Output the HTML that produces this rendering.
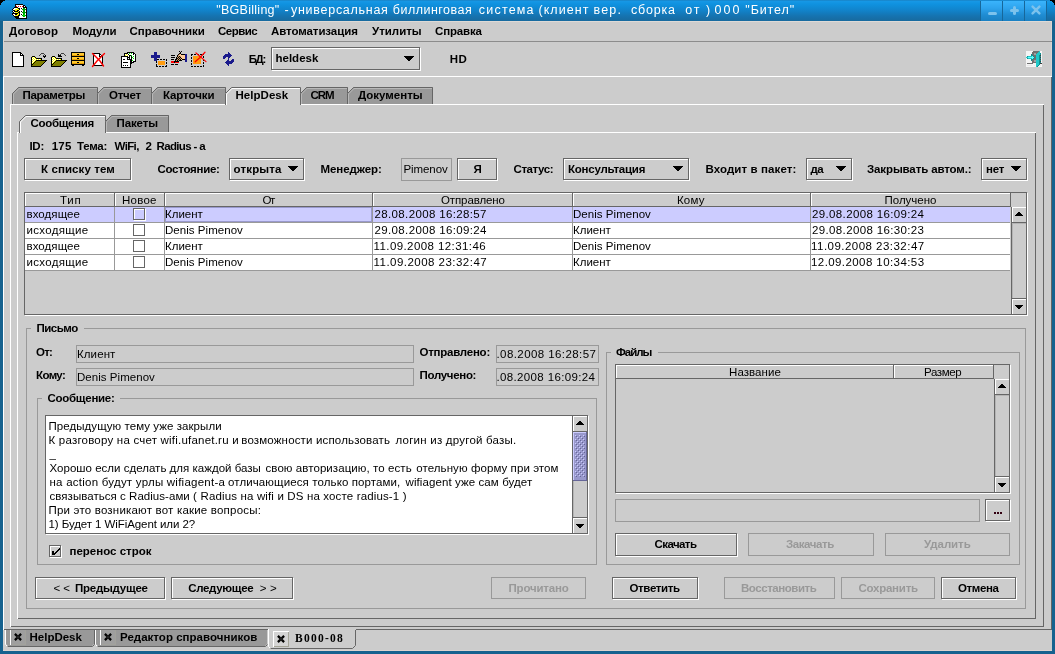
<!DOCTYPE html>
<html><head><meta charset="utf-8"><title>BGBilling</title>
<style>
html,body{margin:0;padding:0;}
body{width:1055px;height:654px;position:relative;overflow:hidden;background:#16628f;font-family:"Liberation Sans",sans-serif;}
div,svg,span{position:absolute;display:block;}
span{white-space:pre;line-height:16px;height:16px;}
</style></head><body>
<div style="left:0;top:0;width:1055px;height:654px;background:#16628f"></div>
<div style="left:0;top:0;width:1055px;height:21px;background:linear-gradient(#1a7ab8 0px,#1798e6 1px,#0f92e0 4px,#1184cc 10px,#1573b0 16px,#186a9e 21px)"></div>
<svg style="left:0px;top:0px;" width="6" height="6" viewBox="0 0 6 6" shape-rendering="crispEdges"><path d="M0 0H5V1H3V2H2V3H1V5H0Z" fill="#000"/></svg>
<svg style="left:1049px;top:0px;" width="6" height="6" viewBox="0 0 6 6" shape-rendering="crispEdges"><path d="M6 0H1V1H3V2H4V3H5V5H6Z" fill="#000"/></svg>
<div style="left:981px;top:1px;width:21px;height:20px;background:linear-gradient(#3ab4fc,#2ea4ee 35%,#1f8cd2 70%,#1a80c2)"></div>
<div style="left:980px;top:1px;width:1px;height:20px;background:#17679a;"></div>
<div style="left:1003px;top:1px;width:21px;height:20px;background:linear-gradient(#3ab4fc,#2ea4ee 35%,#1f8cd2 70%,#1a80c2)"></div>
<div style="left:1002px;top:1px;width:1px;height:20px;background:#17679a;"></div>
<div style="left:1025px;top:1px;width:21px;height:20px;background:linear-gradient(#3ab4fc,#2ea4ee 35%,#1f8cd2 70%,#1a80c2)"></div>
<div style="left:1024px;top:1px;width:1px;height:20px;background:#17679a;"></div>
<div style="left:1046px;top:1px;width:1px;height:20px;background:#17679a;"></div>
<div style="left:988px;top:12px;width:9px;height:3px;background:#7cc2ec;border-radius:1.5px"></div>
<div style="left:1010px;top:9px;width:9px;height:3px;background:#7cc2ec;border-radius:1.5px"></div>
<div style="left:1013px;top:6px;width:3px;height:9px;background:#7cc2ec;border-radius:1.5px"></div>
<svg style="left:1031px;top:5px;" width="10" height="10" viewBox="0 0 10 10" shape-rendering="crispEdges"><path d="M1.6 1.6L8.4 8.4M8.4 1.6L1.6 8.4" stroke="#7cc2ec" stroke-width="2.4" stroke-linecap="round" fill="none" shape-rendering="auto"/></svg>
<div style="left:3px;top:21px;width:1049px;height:630px;background:#cccccc;"></div>
<div style="left:3px;top:21px;width:1049px;height:1px;background:#dedad6;"></div>
<div style="left:3px;top:21px;width:1px;height:55px;background:#dcd4d0;"></div>
<div style="left:1051px;top:21px;width:1px;height:55px;background:#dcd4d0;"></div>
<div style="left:3px;top:650px;width:1049px;height:1px;background:#dcd4d0;"></div>
<div style="left:4px;top:41px;width:1048px;height:1px;background:#8c8c8c;"></div>
<div style="left:3px;top:76px;width:1049px;height:1px;background:#ffffff;"></div>
<div style="left:3px;top:76px;width:1px;height:554px;background:#ffffff;"></div>
<div style="left:4px;top:629px;width:1048px;height:1px;background:#666666;"></div>
<div style="left:1051px;top:77px;width:1px;height:553px;background:#666666;"></div>
<div style="left:5px;top:77px;width:1046px;height:1px;background:#cccccc;"></div>
<div style="left:10px;top:104px;width:1034px;height:1px;background:#ffffff;"></div>
<div style="left:10px;top:104px;width:1px;height:523px;background:#ffffff;"></div>
<div style="left:11px;top:626px;width:1033px;height:1px;background:#666666;"></div>
<div style="left:1043px;top:105px;width:1px;height:522px;background:#666666;"></div>
<svg style="left:12px;top:87px" width="86" height="17" viewBox="0 0 86 17"><polygon points="0,17 0,6 6,0 86,0 86,17" fill="#999999" shape-rendering="crispEdges"/><path d="M0.5 17V6.5L6.5 0.5H85.5V17" fill="none" stroke="#666666" stroke-width="1" shape-rendering="auto"/><path d="M1.5 17V7L7 1.5H85" fill="none" stroke="#b8b8b8" stroke-width="1" shape-rendering="auto"/></svg>
<svg style="left:97px;top:87px" width="55" height="17" viewBox="0 0 55 17"><polygon points="0,17 0,6 6,0 55,0 55,17" fill="#999999" shape-rendering="crispEdges"/><path d="M0.5 17V6.5L6.5 0.5H54.5V17" fill="none" stroke="#666666" stroke-width="1" shape-rendering="auto"/><path d="M1.5 17V7L7 1.5H54" fill="none" stroke="#b8b8b8" stroke-width="1" shape-rendering="auto"/></svg>
<svg style="left:151px;top:87px" width="75" height="17" viewBox="0 0 75 17"><polygon points="0,17 0,6 6,0 75,0 75,17" fill="#999999" shape-rendering="crispEdges"/><path d="M0.5 17V6.5L6.5 0.5H74.5V17" fill="none" stroke="#666666" stroke-width="1" shape-rendering="auto"/><path d="M1.5 17V7L7 1.5H74" fill="none" stroke="#b8b8b8" stroke-width="1" shape-rendering="auto"/></svg>
<svg style="left:225px;top:87px" width="76" height="18" viewBox="0 0 76 18"><polygon points="0,18 0,6 6,0 76,0 76,18" fill="#cccccc" shape-rendering="crispEdges"/><path d="M0.5 18V6.5L6.5 0.5H75.5V18" fill="none" stroke="#666666" stroke-width="1" shape-rendering="auto"/><path d="M1.5 18V7L7 1.5H75" fill="none" stroke="#ffffff" stroke-width="1" shape-rendering="auto"/></svg>
<svg style="left:300px;top:87px" width="48" height="17" viewBox="0 0 48 17"><polygon points="0,17 0,6 6,0 48,0 48,17" fill="#999999" shape-rendering="crispEdges"/><path d="M0.5 17V6.5L6.5 0.5H47.5V17" fill="none" stroke="#666666" stroke-width="1" shape-rendering="auto"/><path d="M1.5 17V7L7 1.5H47" fill="none" stroke="#b8b8b8" stroke-width="1" shape-rendering="auto"/></svg>
<svg style="left:347px;top:87px" width="86" height="17" viewBox="0 0 86 17"><polygon points="0,17 0,6 6,0 86,0 86,17" fill="#999999" shape-rendering="crispEdges"/><path d="M0.5 17V6.5L6.5 0.5H85.5V17" fill="none" stroke="#666666" stroke-width="1" shape-rendering="auto"/><path d="M1.5 17V7L7 1.5H85" fill="none" stroke="#b8b8b8" stroke-width="1" shape-rendering="auto"/></svg>
<div style="left:17px;top:132px;width:1019px;height:1px;background:#ffffff;"></div>
<div style="left:17px;top:132px;width:1px;height:487px;background:#ffffff;"></div>
<div style="left:18px;top:618px;width:1018px;height:1px;background:#666666;"></div>
<div style="left:1035px;top:133px;width:1px;height:486px;background:#666666;"></div>
<svg style="left:19px;top:115px" width="87" height="18" viewBox="0 0 87 18"><polygon points="0,18 0,6 6,0 87,0 87,18" fill="#cccccc" shape-rendering="crispEdges"/><path d="M0.5 18V6.5L6.5 0.5H86.5V18" fill="none" stroke="#666666" stroke-width="1" shape-rendering="auto"/><path d="M1.5 18V7L7 1.5H86" fill="none" stroke="#ffffff" stroke-width="1" shape-rendering="auto"/></svg>
<svg style="left:105px;top:115px" width="64" height="17" viewBox="0 0 64 17"><polygon points="0,17 0,6 6,0 64,0 64,17" fill="#999999" shape-rendering="crispEdges"/><path d="M0.5 17V6.5L6.5 0.5H63.5V17" fill="none" stroke="#666666" stroke-width="1" shape-rendering="auto"/><path d="M1.5 17V7L7 1.5H63" fill="none" stroke="#b8b8b8" stroke-width="1" shape-rendering="auto"/></svg>
<div style="left:272px;top:48px;width:149px;height:1px;background:#ffffff;"></div>
<div style="left:272px;top:70px;width:149px;height:1px;background:#ffffff;"></div>
<div style="left:272px;top:48px;width:1px;height:23px;background:#ffffff;"></div>
<div style="left:420px;top:48px;width:1px;height:23px;background:#ffffff;"></div>
<div style="left:271px;top:47px;width:149px;height:1px;background:#666666;"></div>
<div style="left:271px;top:69px;width:149px;height:1px;background:#666666;"></div>
<div style="left:271px;top:47px;width:1px;height:23px;background:#666666;"></div>
<div style="left:419px;top:47px;width:1px;height:23px;background:#666666;"></div>
<div style="left:271px;top:70px;width:1px;height:1px;background:#cccccc;"></div>
<div style="left:420px;top:47px;width:1px;height:1px;background:#cccccc;"></div>
<svg style="left:404px;top:56px;" width="10" height="5" viewBox="0 0 10 5" shape-rendering="crispEdges"><rect x="0" y="0" width="10" height="1" fill="#000"/><rect x="1" y="1" width="8" height="1" fill="#000"/><rect x="2" y="2" width="6" height="1" fill="#000"/><rect x="3" y="3" width="4" height="1" fill="#000"/><rect x="4" y="4" width="2" height="1" fill="#000"/></svg>
<div style="left:25px;top:159px;width:107px;height:1px;background:#ffffff;"></div>
<div style="left:25px;top:180px;width:107px;height:1px;background:#ffffff;"></div>
<div style="left:25px;top:159px;width:1px;height:22px;background:#ffffff;"></div>
<div style="left:131px;top:159px;width:1px;height:22px;background:#ffffff;"></div>
<div style="left:24px;top:158px;width:107px;height:1px;background:#666666;"></div>
<div style="left:24px;top:179px;width:107px;height:1px;background:#666666;"></div>
<div style="left:24px;top:158px;width:1px;height:22px;background:#666666;"></div>
<div style="left:130px;top:158px;width:1px;height:22px;background:#666666;"></div>
<div style="left:24px;top:180px;width:1px;height:1px;background:#cccccc;"></div>
<div style="left:131px;top:158px;width:1px;height:1px;background:#cccccc;"></div>
<div style="left:230px;top:159px;width:75px;height:1px;background:#ffffff;"></div>
<div style="left:230px;top:180px;width:75px;height:1px;background:#ffffff;"></div>
<div style="left:230px;top:159px;width:1px;height:22px;background:#ffffff;"></div>
<div style="left:304px;top:159px;width:1px;height:22px;background:#ffffff;"></div>
<div style="left:229px;top:158px;width:75px;height:1px;background:#666666;"></div>
<div style="left:229px;top:179px;width:75px;height:1px;background:#666666;"></div>
<div style="left:229px;top:158px;width:1px;height:22px;background:#666666;"></div>
<div style="left:303px;top:158px;width:1px;height:22px;background:#666666;"></div>
<div style="left:229px;top:180px;width:1px;height:1px;background:#cccccc;"></div>
<div style="left:304px;top:158px;width:1px;height:1px;background:#cccccc;"></div>
<svg style="left:288px;top:166px;" width="10" height="5" viewBox="0 0 10 5" shape-rendering="crispEdges"><rect x="0" y="0" width="10" height="1" fill="#000"/><rect x="1" y="1" width="8" height="1" fill="#000"/><rect x="2" y="2" width="6" height="1" fill="#000"/><rect x="3" y="3" width="4" height="1" fill="#000"/><rect x="4" y="4" width="2" height="1" fill="#000"/></svg>
<div style="left:401px;top:158px;width:51px;height:1px;background:#999999;"></div>
<div style="left:401px;top:180px;width:51px;height:1px;background:#999999;"></div>
<div style="left:401px;top:158px;width:1px;height:23px;background:#999999;"></div>
<div style="left:451px;top:158px;width:1px;height:23px;background:#999999;"></div>
<div style="left:458px;top:159px;width:40px;height:1px;background:#ffffff;"></div>
<div style="left:458px;top:180px;width:40px;height:1px;background:#ffffff;"></div>
<div style="left:458px;top:159px;width:1px;height:22px;background:#ffffff;"></div>
<div style="left:497px;top:159px;width:1px;height:22px;background:#ffffff;"></div>
<div style="left:457px;top:158px;width:40px;height:1px;background:#666666;"></div>
<div style="left:457px;top:179px;width:40px;height:1px;background:#666666;"></div>
<div style="left:457px;top:158px;width:1px;height:22px;background:#666666;"></div>
<div style="left:496px;top:158px;width:1px;height:22px;background:#666666;"></div>
<div style="left:457px;top:180px;width:1px;height:1px;background:#cccccc;"></div>
<div style="left:497px;top:158px;width:1px;height:1px;background:#cccccc;"></div>
<div style="left:564px;top:159px;width:126px;height:1px;background:#ffffff;"></div>
<div style="left:564px;top:180px;width:126px;height:1px;background:#ffffff;"></div>
<div style="left:564px;top:159px;width:1px;height:22px;background:#ffffff;"></div>
<div style="left:689px;top:159px;width:1px;height:22px;background:#ffffff;"></div>
<div style="left:563px;top:158px;width:126px;height:1px;background:#666666;"></div>
<div style="left:563px;top:179px;width:126px;height:1px;background:#666666;"></div>
<div style="left:563px;top:158px;width:1px;height:22px;background:#666666;"></div>
<div style="left:688px;top:158px;width:1px;height:22px;background:#666666;"></div>
<div style="left:563px;top:180px;width:1px;height:1px;background:#cccccc;"></div>
<div style="left:689px;top:158px;width:1px;height:1px;background:#cccccc;"></div>
<svg style="left:673px;top:166px;" width="10" height="5" viewBox="0 0 10 5" shape-rendering="crispEdges"><rect x="0" y="0" width="10" height="1" fill="#000"/><rect x="1" y="1" width="8" height="1" fill="#000"/><rect x="2" y="2" width="6" height="1" fill="#000"/><rect x="3" y="3" width="4" height="1" fill="#000"/><rect x="4" y="4" width="2" height="1" fill="#000"/></svg>
<div style="left:807px;top:159px;width:46px;height:1px;background:#ffffff;"></div>
<div style="left:807px;top:180px;width:46px;height:1px;background:#ffffff;"></div>
<div style="left:807px;top:159px;width:1px;height:22px;background:#ffffff;"></div>
<div style="left:852px;top:159px;width:1px;height:22px;background:#ffffff;"></div>
<div style="left:806px;top:158px;width:46px;height:1px;background:#666666;"></div>
<div style="left:806px;top:179px;width:46px;height:1px;background:#666666;"></div>
<div style="left:806px;top:158px;width:1px;height:22px;background:#666666;"></div>
<div style="left:851px;top:158px;width:1px;height:22px;background:#666666;"></div>
<div style="left:806px;top:180px;width:1px;height:1px;background:#cccccc;"></div>
<div style="left:852px;top:158px;width:1px;height:1px;background:#cccccc;"></div>
<svg style="left:836px;top:166px;" width="10" height="5" viewBox="0 0 10 5" shape-rendering="crispEdges"><rect x="0" y="0" width="10" height="1" fill="#000"/><rect x="1" y="1" width="8" height="1" fill="#000"/><rect x="2" y="2" width="6" height="1" fill="#000"/><rect x="3" y="3" width="4" height="1" fill="#000"/><rect x="4" y="4" width="2" height="1" fill="#000"/></svg>
<div style="left:982px;top:159px;width:46px;height:1px;background:#ffffff;"></div>
<div style="left:982px;top:180px;width:46px;height:1px;background:#ffffff;"></div>
<div style="left:982px;top:159px;width:1px;height:22px;background:#ffffff;"></div>
<div style="left:1027px;top:159px;width:1px;height:22px;background:#ffffff;"></div>
<div style="left:981px;top:158px;width:46px;height:1px;background:#666666;"></div>
<div style="left:981px;top:179px;width:46px;height:1px;background:#666666;"></div>
<div style="left:981px;top:158px;width:1px;height:22px;background:#666666;"></div>
<div style="left:1026px;top:158px;width:1px;height:22px;background:#666666;"></div>
<div style="left:981px;top:180px;width:1px;height:1px;background:#cccccc;"></div>
<div style="left:1027px;top:158px;width:1px;height:1px;background:#cccccc;"></div>
<svg style="left:1011px;top:166px;" width="10" height="5" viewBox="0 0 10 5" shape-rendering="crispEdges"><rect x="0" y="0" width="10" height="1" fill="#000"/><rect x="1" y="1" width="8" height="1" fill="#000"/><rect x="2" y="2" width="6" height="1" fill="#000"/><rect x="3" y="3" width="4" height="1" fill="#000"/><rect x="4" y="4" width="2" height="1" fill="#000"/></svg>
<div style="left:24px;top:192px;width:1003px;height:1px;background:#666666;"></div>
<div style="left:24px;top:314px;width:1003px;height:1px;background:#666666;"></div>
<div style="left:24px;top:192px;width:1px;height:123px;background:#666666;"></div>
<div style="left:1026px;top:192px;width:1px;height:123px;background:#666666;"></div>
<div style="left:25px;top:315px;width:1003px;height:1px;background:#ffffff;"></div>
<div style="left:1027px;top:193px;width:1px;height:123px;background:#ffffff;"></div>
<div style="left:25px;top:193px;width:90px;height:1px;background:#ffffff;"></div>
<div style="left:25px;top:193px;width:1px;height:13px;background:#ffffff;"></div>
<div style="left:25px;top:206px;width:90px;height:1px;background:#666666;"></div>
<div style="left:114px;top:193px;width:1px;height:14px;background:#666666;"></div>
<div style="left:115px;top:193px;width:50px;height:1px;background:#ffffff;"></div>
<div style="left:115px;top:193px;width:1px;height:13px;background:#ffffff;"></div>
<div style="left:115px;top:206px;width:50px;height:1px;background:#666666;"></div>
<div style="left:164px;top:193px;width:1px;height:14px;background:#666666;"></div>
<div style="left:165px;top:193px;width:208px;height:1px;background:#ffffff;"></div>
<div style="left:165px;top:193px;width:1px;height:13px;background:#ffffff;"></div>
<div style="left:165px;top:206px;width:208px;height:1px;background:#666666;"></div>
<div style="left:372px;top:193px;width:1px;height:14px;background:#666666;"></div>
<div style="left:373px;top:193px;width:200px;height:1px;background:#ffffff;"></div>
<div style="left:373px;top:193px;width:1px;height:13px;background:#ffffff;"></div>
<div style="left:373px;top:206px;width:200px;height:1px;background:#666666;"></div>
<div style="left:572px;top:193px;width:1px;height:14px;background:#666666;"></div>
<div style="left:573px;top:193px;width:238px;height:1px;background:#ffffff;"></div>
<div style="left:573px;top:193px;width:1px;height:13px;background:#ffffff;"></div>
<div style="left:573px;top:206px;width:238px;height:1px;background:#666666;"></div>
<div style="left:810px;top:193px;width:1px;height:14px;background:#666666;"></div>
<div style="left:811px;top:193px;width:200px;height:1px;background:#ffffff;"></div>
<div style="left:811px;top:193px;width:1px;height:13px;background:#ffffff;"></div>
<div style="left:811px;top:206px;width:200px;height:1px;background:#666666;"></div>
<div style="left:1010px;top:193px;width:1px;height:14px;background:#666666;"></div>
<div style="left:25px;top:207px;width:985px;height:15px;background:#ccccff;"></div>
<div style="left:25px;top:222px;width:985px;height:1px;background:#999999;"></div>
<div style="left:25px;top:223px;width:985px;height:15px;background:#ffffff;"></div>
<div style="left:25px;top:238px;width:985px;height:1px;background:#999999;"></div>
<div style="left:25px;top:239px;width:985px;height:15px;background:#ffffff;"></div>
<div style="left:25px;top:254px;width:985px;height:1px;background:#999999;"></div>
<div style="left:25px;top:255px;width:985px;height:15px;background:#ffffff;"></div>
<div style="left:25px;top:270px;width:985px;height:1px;background:#999999;"></div>
<div style="left:114px;top:207px;width:1px;height:64px;background:#999999;"></div>
<div style="left:164px;top:207px;width:1px;height:64px;background:#999999;"></div>
<div style="left:372px;top:207px;width:1px;height:64px;background:#999999;"></div>
<div style="left:572px;top:207px;width:1px;height:64px;background:#999999;"></div>
<div style="left:810px;top:207px;width:1px;height:64px;background:#999999;"></div>
<div style="left:165px;top:207px;width:207px;height:1px;background:#9999cc;"></div>
<div style="left:165px;top:221px;width:207px;height:1px;background:#9999cc;"></div>
<div style="left:165px;top:207px;width:1px;height:15px;background:#9999cc;"></div>
<div style="left:371px;top:207px;width:1px;height:15px;background:#9999cc;"></div>
<div style="left:133px;top:208px;width:12px;height:12px;background:#ccccff;"></div>
<div style="left:134px;top:209px;width:12px;height:1px;background:#ffffff;"></div>
<div style="left:134px;top:220px;width:12px;height:1px;background:#ffffff;"></div>
<div style="left:134px;top:209px;width:1px;height:12px;background:#ffffff;"></div>
<div style="left:145px;top:209px;width:1px;height:12px;background:#ffffff;"></div>
<div style="left:133px;top:208px;width:12px;height:1px;background:#666666;"></div>
<div style="left:133px;top:219px;width:12px;height:1px;background:#666666;"></div>
<div style="left:133px;top:208px;width:1px;height:12px;background:#666666;"></div>
<div style="left:144px;top:208px;width:1px;height:12px;background:#666666;"></div>
<div style="left:133px;top:220px;width:1px;height:1px;background:#ccccff;"></div>
<div style="left:145px;top:208px;width:1px;height:1px;background:#ccccff;"></div>
<div style="left:133px;top:224px;width:12px;height:12px;background:#ffffff;"></div>
<div style="left:134px;top:225px;width:12px;height:1px;background:#ffffff;"></div>
<div style="left:134px;top:236px;width:12px;height:1px;background:#ffffff;"></div>
<div style="left:134px;top:225px;width:1px;height:12px;background:#ffffff;"></div>
<div style="left:145px;top:225px;width:1px;height:12px;background:#ffffff;"></div>
<div style="left:133px;top:224px;width:12px;height:1px;background:#666666;"></div>
<div style="left:133px;top:235px;width:12px;height:1px;background:#666666;"></div>
<div style="left:133px;top:224px;width:1px;height:12px;background:#666666;"></div>
<div style="left:144px;top:224px;width:1px;height:12px;background:#666666;"></div>
<div style="left:133px;top:236px;width:1px;height:1px;background:#ffffff;"></div>
<div style="left:145px;top:224px;width:1px;height:1px;background:#ffffff;"></div>
<div style="left:133px;top:240px;width:12px;height:12px;background:#ffffff;"></div>
<div style="left:134px;top:241px;width:12px;height:1px;background:#ffffff;"></div>
<div style="left:134px;top:252px;width:12px;height:1px;background:#ffffff;"></div>
<div style="left:134px;top:241px;width:1px;height:12px;background:#ffffff;"></div>
<div style="left:145px;top:241px;width:1px;height:12px;background:#ffffff;"></div>
<div style="left:133px;top:240px;width:12px;height:1px;background:#666666;"></div>
<div style="left:133px;top:251px;width:12px;height:1px;background:#666666;"></div>
<div style="left:133px;top:240px;width:1px;height:12px;background:#666666;"></div>
<div style="left:144px;top:240px;width:1px;height:12px;background:#666666;"></div>
<div style="left:133px;top:252px;width:1px;height:1px;background:#ffffff;"></div>
<div style="left:145px;top:240px;width:1px;height:1px;background:#ffffff;"></div>
<div style="left:133px;top:256px;width:12px;height:12px;background:#ffffff;"></div>
<div style="left:134px;top:257px;width:12px;height:1px;background:#ffffff;"></div>
<div style="left:134px;top:268px;width:12px;height:1px;background:#ffffff;"></div>
<div style="left:134px;top:257px;width:1px;height:12px;background:#ffffff;"></div>
<div style="left:145px;top:257px;width:1px;height:12px;background:#ffffff;"></div>
<div style="left:133px;top:256px;width:12px;height:1px;background:#666666;"></div>
<div style="left:133px;top:267px;width:12px;height:1px;background:#666666;"></div>
<div style="left:133px;top:256px;width:1px;height:12px;background:#666666;"></div>
<div style="left:144px;top:256px;width:1px;height:12px;background:#666666;"></div>
<div style="left:133px;top:268px;width:1px;height:1px;background:#ffffff;"></div>
<div style="left:145px;top:256px;width:1px;height:1px;background:#ffffff;"></div>
<div style="left:1011px;top:207px;width:15px;height:107px;background:#cccccc;"></div>
<div style="left:1011px;top:207px;width:1px;height:107px;background:#666666;"></div>
<div style="left:1012px;top:207px;width:14px;height:1px;background:#ffffff;"></div>
<div style="left:1012px;top:207px;width:1px;height:15px;background:#ffffff;"></div>
<div style="left:1011px;top:222px;width:15px;height:1px;background:#666666;"></div>
<svg style="left:1015px;top:212px;" width="8" height="4" viewBox="0 0 8 4" shape-rendering="crispEdges"><rect x="3" y="0" width="2" height="1" fill="#000"/><rect x="2" y="1" width="4" height="1" fill="#000"/><rect x="1" y="2" width="6" height="1" fill="#000"/><rect x="0" y="3" width="8" height="1" fill="#000"/></svg>
<div style="left:1011px;top:298px;width:15px;height:1px;background:#666666;"></div>
<div style="left:1012px;top:299px;width:14px;height:1px;background:#ffffff;"></div>
<div style="left:1012px;top:299px;width:1px;height:15px;background:#ffffff;"></div>
<svg style="left:1015px;top:305px;" width="8" height="4" viewBox="0 0 8 4" shape-rendering="crispEdges"><rect x="0" y="0" width="8" height="1" fill="#000"/><rect x="1" y="1" width="6" height="1" fill="#000"/><rect x="2" y="2" width="4" height="1" fill="#000"/><rect x="3" y="3" width="2" height="1" fill="#000"/></svg>
<div style="left:1012px;top:223px;width:14px;height:1px;background:#b4b4b4;"></div>
<div style="left:1012px;top:223px;width:1px;height:75px;background:#b4b4b4;"></div>
<div style="left:26px;top:328px;width:5px;height:1px;background:#999999;"></div>
<div style="left:84px;top:328px;width:942px;height:1px;background:#999999;"></div>
<div style="left:26px;top:328px;width:1px;height:281px;background:#999999;"></div>
<div style="left:1025px;top:328px;width:1px;height:281px;background:#999999;"></div>
<div style="left:26px;top:608px;width:1000px;height:1px;background:#999999;"></div>
<div style="left:76px;top:345px;width:338px;height:1px;background:#999999;"></div>
<div style="left:76px;top:362px;width:338px;height:1px;background:#999999;"></div>
<div style="left:76px;top:345px;width:1px;height:18px;background:#999999;"></div>
<div style="left:413px;top:345px;width:1px;height:18px;background:#999999;"></div>
<div style="left:76px;top:368px;width:338px;height:1px;background:#999999;"></div>
<div style="left:76px;top:385px;width:338px;height:1px;background:#999999;"></div>
<div style="left:76px;top:368px;width:1px;height:18px;background:#999999;"></div>
<div style="left:413px;top:368px;width:1px;height:18px;background:#999999;"></div>
<div style="left:496px;top:345px;width:103px;height:1px;background:#999999;"></div>
<div style="left:496px;top:362px;width:103px;height:1px;background:#999999;"></div>
<div style="left:496px;top:345px;width:1px;height:18px;background:#999999;"></div>
<div style="left:598px;top:345px;width:1px;height:18px;background:#999999;"></div>
<div style="left:496px;top:368px;width:103px;height:1px;background:#999999;"></div>
<div style="left:496px;top:385px;width:103px;height:1px;background:#999999;"></div>
<div style="left:496px;top:368px;width:1px;height:18px;background:#999999;"></div>
<div style="left:598px;top:368px;width:1px;height:18px;background:#999999;"></div>
<div style="left:37px;top:398px;width:5px;height:1px;background:#999999;"></div>
<div style="left:120px;top:398px;width:477px;height:1px;background:#999999;"></div>
<div style="left:37px;top:398px;width:1px;height:167px;background:#999999;"></div>
<div style="left:596px;top:398px;width:1px;height:167px;background:#999999;"></div>
<div style="left:37px;top:564px;width:560px;height:1px;background:#999999;"></div>
<div style="left:606px;top:352px;width:5px;height:1px;background:#999999;"></div>
<div style="left:658px;top:352px;width:362px;height:1px;background:#999999;"></div>
<div style="left:606px;top:352px;width:1px;height:213px;background:#999999;"></div>
<div style="left:1019px;top:352px;width:1px;height:213px;background:#999999;"></div>
<div style="left:606px;top:564px;width:414px;height:1px;background:#999999;"></div>
<div style="left:45px;top:415px;width:543px;height:1px;background:#666666;"></div>
<div style="left:45px;top:533px;width:543px;height:1px;background:#666666;"></div>
<div style="left:45px;top:415px;width:1px;height:119px;background:#666666;"></div>
<div style="left:587px;top:415px;width:1px;height:119px;background:#666666;"></div>
<div style="left:46px;top:534px;width:543px;height:1px;background:#ffffff;"></div>
<div style="left:588px;top:416px;width:1px;height:119px;background:#ffffff;"></div>
<div style="left:46px;top:416px;width:526px;height:117px;background:#ffffff;"></div>
<div style="left:572px;top:416px;width:15px;height:117px;background:#cccccc;"></div>
<div style="left:572px;top:416px;width:1px;height:117px;background:#666666;"></div>
<div style="left:573px;top:416px;width:14px;height:1px;background:#ffffff;"></div>
<div style="left:573px;top:416px;width:1px;height:15px;background:#ffffff;"></div>
<div style="left:572px;top:431px;width:15px;height:1px;background:#666666;"></div>
<svg style="left:576px;top:421px;" width="8" height="4" viewBox="0 0 8 4" shape-rendering="crispEdges"><rect x="3" y="0" width="2" height="1" fill="#000"/><rect x="2" y="1" width="4" height="1" fill="#000"/><rect x="1" y="2" width="6" height="1" fill="#000"/><rect x="0" y="3" width="8" height="1" fill="#000"/></svg>
<div style="left:572px;top:517px;width:15px;height:1px;background:#666666;"></div>
<div style="left:573px;top:518px;width:14px;height:1px;background:#ffffff;"></div>
<div style="left:573px;top:518px;width:1px;height:15px;background:#ffffff;"></div>
<svg style="left:576px;top:524px;" width="8" height="4" viewBox="0 0 8 4" shape-rendering="crispEdges"><rect x="0" y="0" width="8" height="1" fill="#000"/><rect x="1" y="1" width="6" height="1" fill="#000"/><rect x="2" y="2" width="4" height="1" fill="#000"/><rect x="3" y="3" width="2" height="1" fill="#000"/></svg>
<div style="left:573px;top:432px;width:14px;height:1px;background:#b4b4b4;"></div>
<div style="left:573px;top:432px;width:1px;height:85px;background:#b4b4b4;"></div>
<div style="left:573px;top:432px;width:14px;height:49px;background:#9999cc;"></div>
<div style="left:586px;top:432px;width:1px;height:49px;background:#666699;"></div>
<div style="left:573px;top:480px;width:14px;height:1px;background:#666699;"></div>
<div style="left:573px;top:432px;width:13px;height:1px;background:#ccccff;"></div>
<div style="left:573px;top:432px;width:1px;height:48px;background:#ccccff;"></div>
<svg style="left:575px;top:435px;" width="10" height="42" viewBox="0 0 10 42" shape-rendering="crispEdges"><defs><pattern id="bmp" width="4" height="4" patternUnits="userSpaceOnUse"><rect width="1" height="1" fill="#ccccff"/><rect x="1" y="1" width="1" height="1" fill="#666699"/><rect x="2" y="2" width="1" height="1" fill="#ccccff"/><rect x="3" y="3" width="1" height="1" fill="#666699"/></pattern></defs><rect width="10" height="42" fill="url(#bmp)"/></svg>
<div style="left:50px;top:546px;width:12px;height:1px;background:#ffffff;"></div>
<div style="left:50px;top:557px;width:12px;height:1px;background:#ffffff;"></div>
<div style="left:50px;top:546px;width:1px;height:12px;background:#ffffff;"></div>
<div style="left:61px;top:546px;width:1px;height:12px;background:#ffffff;"></div>
<div style="left:49px;top:545px;width:12px;height:1px;background:#666666;"></div>
<div style="left:49px;top:556px;width:12px;height:1px;background:#666666;"></div>
<div style="left:49px;top:545px;width:1px;height:12px;background:#666666;"></div>
<div style="left:60px;top:545px;width:1px;height:12px;background:#666666;"></div>
<div style="left:49px;top:557px;width:1px;height:1px;background:#cccccc;"></div>
<div style="left:61px;top:545px;width:1px;height:1px;background:#cccccc;"></div>
<svg style="left:52px;top:548px;" width="9" height="9" viewBox="0 0 9 9" shape-rendering="crispEdges"><path d="M0 3h2v4h-2z M2 5h1v2h-1z M3 4h1v2h-1z M4 3h1v2h-1z M5 2h1v2h-1z M6 1h1v2h-1z M7 0h1v2h-1z" fill="#000"/></svg>
<div style="left:615px;top:364px;width:395px;height:1px;background:#666666;"></div>
<div style="left:615px;top:492px;width:395px;height:1px;background:#666666;"></div>
<div style="left:615px;top:364px;width:1px;height:129px;background:#666666;"></div>
<div style="left:1009px;top:364px;width:1px;height:129px;background:#666666;"></div>
<div style="left:616px;top:493px;width:395px;height:1px;background:#ffffff;"></div>
<div style="left:1010px;top:365px;width:1px;height:129px;background:#ffffff;"></div>
<div style="left:616px;top:365px;width:278px;height:1px;background:#ffffff;"></div>
<div style="left:616px;top:365px;width:1px;height:13px;background:#ffffff;"></div>
<div style="left:616px;top:378px;width:278px;height:1px;background:#666666;"></div>
<div style="left:893px;top:365px;width:1px;height:14px;background:#666666;"></div>
<div style="left:894px;top:365px;width:100px;height:1px;background:#ffffff;"></div>
<div style="left:894px;top:365px;width:1px;height:13px;background:#ffffff;"></div>
<div style="left:894px;top:378px;width:100px;height:1px;background:#666666;"></div>
<div style="left:993px;top:365px;width:1px;height:14px;background:#666666;"></div>
<div style="left:994px;top:379px;width:15px;height:113px;background:#cccccc;"></div>
<div style="left:994px;top:379px;width:1px;height:113px;background:#666666;"></div>
<div style="left:995px;top:379px;width:14px;height:1px;background:#ffffff;"></div>
<div style="left:995px;top:379px;width:1px;height:15px;background:#ffffff;"></div>
<div style="left:994px;top:394px;width:15px;height:1px;background:#666666;"></div>
<svg style="left:998px;top:384px;" width="8" height="4" viewBox="0 0 8 4" shape-rendering="crispEdges"><rect x="3" y="0" width="2" height="1" fill="#000"/><rect x="2" y="1" width="4" height="1" fill="#000"/><rect x="1" y="2" width="6" height="1" fill="#000"/><rect x="0" y="3" width="8" height="1" fill="#000"/></svg>
<div style="left:994px;top:476px;width:15px;height:1px;background:#666666;"></div>
<div style="left:995px;top:477px;width:14px;height:1px;background:#ffffff;"></div>
<div style="left:995px;top:477px;width:1px;height:15px;background:#ffffff;"></div>
<svg style="left:998px;top:483px;" width="8" height="4" viewBox="0 0 8 4" shape-rendering="crispEdges"><rect x="0" y="0" width="8" height="1" fill="#000"/><rect x="1" y="1" width="6" height="1" fill="#000"/><rect x="2" y="2" width="4" height="1" fill="#000"/><rect x="3" y="3" width="2" height="1" fill="#000"/></svg>
<div style="left:995px;top:395px;width:14px;height:1px;background:#b4b4b4;"></div>
<div style="left:995px;top:395px;width:1px;height:81px;background:#b4b4b4;"></div>
<div style="left:615px;top:499px;width:365px;height:1px;background:#999999;"></div>
<div style="left:615px;top:521px;width:365px;height:1px;background:#999999;"></div>
<div style="left:615px;top:499px;width:1px;height:23px;background:#999999;"></div>
<div style="left:979px;top:499px;width:1px;height:23px;background:#999999;"></div>
<div style="left:986px;top:500px;width:25px;height:1px;background:#ffffff;"></div>
<div style="left:986px;top:521px;width:25px;height:1px;background:#ffffff;"></div>
<div style="left:986px;top:500px;width:1px;height:22px;background:#ffffff;"></div>
<div style="left:1010px;top:500px;width:1px;height:22px;background:#ffffff;"></div>
<div style="left:985px;top:499px;width:25px;height:1px;background:#666666;"></div>
<div style="left:985px;top:520px;width:25px;height:1px;background:#666666;"></div>
<div style="left:985px;top:499px;width:1px;height:22px;background:#666666;"></div>
<div style="left:1009px;top:499px;width:1px;height:22px;background:#666666;"></div>
<div style="left:985px;top:521px;width:1px;height:1px;background:#cccccc;"></div>
<div style="left:1010px;top:499px;width:1px;height:1px;background:#cccccc;"></div>
<div style="left:994px;top:512px;width:2px;height:2px;background:#330011;"></div>
<div style="left:997px;top:512px;width:2px;height:2px;background:#330011;"></div>
<div style="left:1000px;top:512px;width:2px;height:2px;background:#330011;"></div>
<div style="left:616px;top:534px;width:122px;height:1px;background:#ffffff;"></div>
<div style="left:616px;top:556px;width:122px;height:1px;background:#ffffff;"></div>
<div style="left:616px;top:534px;width:1px;height:23px;background:#ffffff;"></div>
<div style="left:737px;top:534px;width:1px;height:23px;background:#ffffff;"></div>
<div style="left:615px;top:533px;width:122px;height:1px;background:#666666;"></div>
<div style="left:615px;top:555px;width:122px;height:1px;background:#666666;"></div>
<div style="left:615px;top:533px;width:1px;height:23px;background:#666666;"></div>
<div style="left:736px;top:533px;width:1px;height:23px;background:#666666;"></div>
<div style="left:615px;top:556px;width:1px;height:1px;background:#cccccc;"></div>
<div style="left:737px;top:533px;width:1px;height:1px;background:#cccccc;"></div>
<div style="left:748px;top:533px;width:126px;height:1px;background:#999999;"></div>
<div style="left:748px;top:555px;width:126px;height:1px;background:#999999;"></div>
<div style="left:748px;top:533px;width:1px;height:23px;background:#999999;"></div>
<div style="left:873px;top:533px;width:1px;height:23px;background:#999999;"></div>
<div style="left:885px;top:533px;width:125px;height:1px;background:#999999;"></div>
<div style="left:885px;top:555px;width:125px;height:1px;background:#999999;"></div>
<div style="left:885px;top:533px;width:1px;height:23px;background:#999999;"></div>
<div style="left:1009px;top:533px;width:1px;height:23px;background:#999999;"></div>
<div style="left:36px;top:578px;width:130px;height:1px;background:#ffffff;"></div>
<div style="left:36px;top:599px;width:130px;height:1px;background:#ffffff;"></div>
<div style="left:36px;top:578px;width:1px;height:22px;background:#ffffff;"></div>
<div style="left:165px;top:578px;width:1px;height:22px;background:#ffffff;"></div>
<div style="left:35px;top:577px;width:130px;height:1px;background:#666666;"></div>
<div style="left:35px;top:598px;width:130px;height:1px;background:#666666;"></div>
<div style="left:35px;top:577px;width:1px;height:22px;background:#666666;"></div>
<div style="left:164px;top:577px;width:1px;height:22px;background:#666666;"></div>
<div style="left:35px;top:599px;width:1px;height:1px;background:#cccccc;"></div>
<div style="left:165px;top:577px;width:1px;height:1px;background:#cccccc;"></div>
<div style="left:172px;top:578px;width:122px;height:1px;background:#ffffff;"></div>
<div style="left:172px;top:599px;width:122px;height:1px;background:#ffffff;"></div>
<div style="left:172px;top:578px;width:1px;height:22px;background:#ffffff;"></div>
<div style="left:293px;top:578px;width:1px;height:22px;background:#ffffff;"></div>
<div style="left:171px;top:577px;width:122px;height:1px;background:#666666;"></div>
<div style="left:171px;top:598px;width:122px;height:1px;background:#666666;"></div>
<div style="left:171px;top:577px;width:1px;height:22px;background:#666666;"></div>
<div style="left:292px;top:577px;width:1px;height:22px;background:#666666;"></div>
<div style="left:171px;top:599px;width:1px;height:1px;background:#cccccc;"></div>
<div style="left:293px;top:577px;width:1px;height:1px;background:#cccccc;"></div>
<div style="left:491px;top:577px;width:95px;height:1px;background:#999999;"></div>
<div style="left:491px;top:598px;width:95px;height:1px;background:#999999;"></div>
<div style="left:491px;top:577px;width:1px;height:22px;background:#999999;"></div>
<div style="left:585px;top:577px;width:1px;height:22px;background:#999999;"></div>
<div style="left:613px;top:578px;width:86px;height:1px;background:#ffffff;"></div>
<div style="left:613px;top:599px;width:86px;height:1px;background:#ffffff;"></div>
<div style="left:613px;top:578px;width:1px;height:22px;background:#ffffff;"></div>
<div style="left:698px;top:578px;width:1px;height:22px;background:#ffffff;"></div>
<div style="left:612px;top:577px;width:86px;height:1px;background:#666666;"></div>
<div style="left:612px;top:598px;width:86px;height:1px;background:#666666;"></div>
<div style="left:612px;top:577px;width:1px;height:22px;background:#666666;"></div>
<div style="left:697px;top:577px;width:1px;height:22px;background:#666666;"></div>
<div style="left:612px;top:599px;width:1px;height:1px;background:#cccccc;"></div>
<div style="left:698px;top:577px;width:1px;height:1px;background:#cccccc;"></div>
<div style="left:724px;top:577px;width:111px;height:1px;background:#999999;"></div>
<div style="left:724px;top:598px;width:111px;height:1px;background:#999999;"></div>
<div style="left:724px;top:577px;width:1px;height:22px;background:#999999;"></div>
<div style="left:834px;top:577px;width:1px;height:22px;background:#999999;"></div>
<div style="left:841px;top:577px;width:94px;height:1px;background:#999999;"></div>
<div style="left:841px;top:598px;width:94px;height:1px;background:#999999;"></div>
<div style="left:841px;top:577px;width:1px;height:22px;background:#999999;"></div>
<div style="left:934px;top:577px;width:1px;height:22px;background:#999999;"></div>
<div style="left:942px;top:578px;width:75px;height:1px;background:#ffffff;"></div>
<div style="left:942px;top:599px;width:75px;height:1px;background:#ffffff;"></div>
<div style="left:942px;top:578px;width:1px;height:22px;background:#ffffff;"></div>
<div style="left:1016px;top:578px;width:1px;height:22px;background:#ffffff;"></div>
<div style="left:941px;top:577px;width:75px;height:1px;background:#666666;"></div>
<div style="left:941px;top:598px;width:75px;height:1px;background:#666666;"></div>
<div style="left:941px;top:577px;width:1px;height:22px;background:#666666;"></div>
<div style="left:1015px;top:577px;width:1px;height:22px;background:#666666;"></div>
<div style="left:941px;top:599px;width:1px;height:1px;background:#cccccc;"></div>
<div style="left:1016px;top:577px;width:1px;height:1px;background:#cccccc;"></div>
<svg style="left:5px;top:630px" width="90" height="17" viewBox="0 0 90 17"><path d="M1 0V14L3 16H87L89 14V0Z" fill="#999999"/><path d="M0.5 0V14.5L2.5 16.5" fill="none" stroke="#ffffff"/><path d="M2.5 16.5H87.5L89.5 14.5V0" fill="none" stroke="#666666"/></svg>
<div style="left:10px;top:630px;width:1px;height:15px;background:#ffffff;"></div>
<div style="left:12px;top:630px;width:14px;height:15px;background:#a2a29c;"></div>
<div style="left:12px;top:630px;width:13px;height:14px;background:#9f9f9f;"></div>
<svg style="left:14px;top:633px;" width="8" height="8" viewBox="0 0 8 8" shape-rendering="crispEdges"><path d="M0.9 0.9L7.1 7.1M7.1 0.9L0.9 7.1" stroke="#000" stroke-width="2.2" fill="none" shape-rendering="auto"/><rect x="2.5" y="2.5" width="3" height="3" fill="#222" shape-rendering="auto"/></svg>
<svg style="left:95px;top:630px" width="173" height="17" viewBox="0 0 173 17"><path d="M1 0V14L3 16H170L172 14V0Z" fill="#999999"/><path d="M0.5 0V14.5L2.5 16.5" fill="none" stroke="#ffffff"/><path d="M2.5 16.5H170.5L172.5 14.5" fill="none" stroke="#666666"/></svg>
<div style="left:100px;top:630px;width:1px;height:15px;background:#ffffff;"></div>
<div style="left:102px;top:630px;width:14px;height:15px;background:#a2a29c;"></div>
<div style="left:102px;top:630px;width:13px;height:14px;background:#9f9f9f;"></div>
<svg style="left:104px;top:633px;" width="8" height="8" viewBox="0 0 8 8" shape-rendering="crispEdges"><path d="M0.9 0.9L7.1 7.1M7.1 0.9L0.9 7.1" stroke="#000" stroke-width="2.2" fill="none" shape-rendering="auto"/><rect x="2.5" y="2.5" width="3" height="3" fill="#222" shape-rendering="auto"/></svg>
<div style="left:268px;top:629px;width:88px;height:1px;background:#cccccc;"></div>
<svg style="left:268px;top:629px" width="88" height="20" viewBox="0 0 88 20"><path d="M0 0V17L3 20H85L88 17V2L89 0Z" fill="#cccccc"/><path d="M0.5 0V17.5L2.5 19.5" fill="none" stroke="#ffffff"/><path d="M2.5 19.5H84.5L87.5 16.5V1" fill="none" stroke="#666666"/></svg>
<div style="left:273px;top:631px;width:16px;height:16px;background:#d4d4d4;"></div>
<div style="left:273px;top:631px;width:16px;height:1px;background:#ffffff;"></div>
<div style="left:273px;top:631px;width:1px;height:16px;background:#ffffff;"></div>
<div style="left:274px;top:646px;width:15px;height:1px;background:#a4a498;"></div>
<div style="left:288px;top:632px;width:1px;height:15px;background:#a4a498;"></div>
<svg style="left:277px;top:635px;" width="8" height="8" viewBox="0 0 8 8" shape-rendering="crispEdges"><path d="M0.9 0.9L7.1 7.1M7.1 0.9L0.9 7.1" stroke="#000" stroke-width="2.2" fill="none" shape-rendering="auto"/><rect x="2.5" y="2.5" width="3" height="3" fill="#222" shape-rendering="auto"/></svg>
<div id="tx" style="left:0;top:0;width:1055px;height:654px;will-change:transform">
<span style="left:216.30px;top:2px;font-size:12.5px;letter-spacing:0.270px;color:#ffffff;">&quot;BGBilling&quot;</span>
<span style="left:284.50px;top:2px;font-size:12.5px;letter-spacing:0.000px;color:#ffffff;">-</span>
<span style="left:291.00px;top:2px;font-size:12.5px;letter-spacing:0.725px;color:#ffffff;">универсальная</span>
<span style="left:392.80px;top:2px;font-size:12.5px;letter-spacing:0.480px;color:#ffffff;">биллинговая</span>
<span style="left:478.80px;top:2px;font-size:12.5px;letter-spacing:1.200px;color:#ffffff;">система</span>
<span style="left:538.40px;top:2px;font-size:12.5px;letter-spacing:1.083px;color:#ffffff;">(клиент</span>
<span style="left:593.50px;top:2px;font-size:12.5px;letter-spacing:1.167px;color:#ffffff;">вер.</span>
<span style="left:631.00px;top:2px;font-size:12.5px;letter-spacing:0.800px;color:#ffffff;">сборка</span>
<span style="left:685.20px;top:2px;font-size:12.5px;letter-spacing:1.800px;color:#ffffff;">от</span>
<span style="left:706.00px;top:2px;font-size:12.5px;letter-spacing:0.000px;color:#ffffff;">)</span>
<span style="left:714.60px;top:2px;font-size:12.5px;letter-spacing:2.000px;color:#ffffff;">000</span>
<span style="left:745.30px;top:2px;font-size:12.5px;letter-spacing:0.900px;color:#ffffff;">&quot;Бител&quot;</span>
<span style="left:9.00px;top:23px;font-size:11.5px;letter-spacing:0.167px;color:#000;font-weight:bold;">Договор</span>
<span style="left:72.50px;top:23px;font-size:11.5px;letter-spacing:-0.100px;color:#000;font-weight:bold;">Модули</span>
<span style="left:129.50px;top:23px;font-size:11.5px;letter-spacing:-0.050px;color:#000;font-weight:bold;">Справочники</span>
<span style="left:218.00px;top:23px;font-size:11.5px;letter-spacing:-0.500px;color:#000;font-weight:bold;">Сервис</span>
<span style="left:271.00px;top:23px;font-size:11.5px;letter-spacing:-0.083px;color:#000;font-weight:bold;">Автоматизация</span>
<span style="left:372.00px;top:23px;font-size:11.5px;letter-spacing:0.000px;color:#000;font-weight:bold;">Утилиты</span>
<span style="left:435.00px;top:23px;font-size:11.5px;letter-spacing:-0.167px;color:#000;font-weight:bold;">Справка</span>
<span style="left:248.70px;top:51px;font-size:11.5px;letter-spacing:-1.350px;color:#000;font-weight:bold;">БД:</span>
<span style="left:275.50px;top:50px;font-size:11.5px;letter-spacing:0.000px;color:#000;font-weight:bold;">heldesk</span>
<span style="left:449.70px;top:51px;font-size:11.5px;letter-spacing:0.600px;color:#000;font-weight:bold;">HD</span>
<span style="left:22.50px;top:87px;font-size:11.5px;letter-spacing:-0.312px;color:#000;font-weight:bold;">Параметры</span>
<span style="left:109.00px;top:87px;font-size:11.5px;letter-spacing:-0.250px;color:#000;font-weight:bold;">Отчет</span>
<span style="left:162.90px;top:87px;font-size:11.5px;letter-spacing:-0.071px;color:#000;font-weight:bold;">Карточки</span>
<span style="left:235.40px;top:87px;font-size:11.5px;letter-spacing:0.057px;color:#000;font-weight:bold;">HelpDesk</span>
<span style="left:310.50px;top:87px;font-size:11.5px;letter-spacing:-1.000px;color:#000;font-weight:bold;">CRM</span>
<span style="left:358.00px;top:87px;font-size:11.5px;letter-spacing:0.000px;color:#000;font-weight:bold;">Документы</span>
<span style="left:30.50px;top:115px;font-size:11.5px;letter-spacing:-0.312px;color:#000;font-weight:bold;">Сообщения</span>
<span style="left:116.50px;top:115px;font-size:11.5px;letter-spacing:-0.100px;color:#000;font-weight:bold;">Пакеты</span>
<span style="left:29.40px;top:138px;font-size:11.5px;letter-spacing:-0.250px;color:#000;font-weight:bold;">ID:</span>
<span style="left:51.80px;top:138px;font-size:11.5px;letter-spacing:0.150px;color:#000;font-weight:bold;">175</span>
<span style="left:77.10px;top:138px;font-size:11.5px;letter-spacing:-0.275px;color:#000;font-weight:bold;">Тема:</span>
<span style="left:114.50px;top:138px;font-size:11.5px;letter-spacing:-0.625px;color:#000;font-weight:bold;">WiFi,</span>
<span style="left:145.50px;top:138px;font-size:11.5px;letter-spacing:0.000px;color:#000;font-weight:bold;">2</span>
<span style="left:156.50px;top:138px;font-size:11.5px;letter-spacing:-0.650px;color:#000;font-weight:bold;">Radius</span>
<span style="left:193.50px;top:138px;font-size:11.5px;letter-spacing:2.000px;color:#000;font-weight:bold;">-a</span>
<span style="left:41.00px;top:161px;font-size:11.5px;letter-spacing:0.091px;color:#000;font-weight:bold;">К списку тем</span>
<span style="left:157.50px;top:161px;font-size:11.5px;letter-spacing:-0.278px;color:#000;font-weight:bold;">Состояние:</span>
<span style="left:233.50px;top:161px;font-size:11.5px;letter-spacing:0.167px;color:#000;font-weight:bold;">открыта</span>
<span style="left:320.50px;top:161px;font-size:11.5px;letter-spacing:-0.062px;color:#000;font-weight:bold;">Менеджер:</span>
<span style="left:403.50px;top:161px;font-size:11.5px;letter-spacing:-0.083px;color:#000;">Pimenov</span>
<span style="left:473.50px;top:161px;font-size:11.5px;letter-spacing:0.000px;color:#000;font-weight:bold;">Я</span>
<span style="left:513.50px;top:161px;font-size:11.5px;letter-spacing:-0.417px;color:#000;font-weight:bold;">Статус:</span>
<span style="left:568.00px;top:161px;font-size:11.5px;letter-spacing:-0.227px;color:#000;font-weight:bold;">Консультация</span>
<span style="left:705.50px;top:161px;font-size:11.5px;letter-spacing:0.107px;color:#000;font-weight:bold;">Входит в пакет:</span>
<span style="left:810.50px;top:161px;font-size:11.5px;letter-spacing:-0.500px;color:#000;font-weight:bold;">да</span>
<span style="left:867.00px;top:161px;font-size:11.5px;letter-spacing:-0.125px;color:#000;font-weight:bold;">Закрывать автом.:</span>
<span style="left:986.00px;top:161px;font-size:11.5px;letter-spacing:-0.250px;color:#000;font-weight:bold;">нет</span>
<span style="left:60.00px;top:192px;font-size:11.5px;letter-spacing:0.750px;color:#000;">Тип</span>
<span style="left:122.00px;top:192px;font-size:11.5px;letter-spacing:0.250px;color:#000;">Новое</span>
<span style="left:262.50px;top:192px;font-size:11.5px;letter-spacing:-1.500px;color:#000;">От</span>
<span style="left:441.00px;top:192px;font-size:11.5px;letter-spacing:-0.111px;color:#000;">Отправлено</span>
<span style="left:677.00px;top:192px;font-size:11.5px;letter-spacing:0.167px;color:#000;">Кому</span>
<span style="left:884.50px;top:192px;font-size:11.5px;letter-spacing:0.000px;color:#000;">Получено</span>
<span style="left:26.50px;top:206px;font-size:11.5px;letter-spacing:0.071px;color:#000;">входящее</span>
<span style="left:165.00px;top:206px;font-size:11.5px;letter-spacing:0.000px;color:#000;">Клиент</span>
<span style="left:374.50px;top:206px;font-size:11.5px;letter-spacing:0.361px;color:#000;">28.08.2008 16:28:57</span>
<span style="left:573.00px;top:206px;font-size:11.5px;letter-spacing:0.042px;color:#000;">Denis Pimenov</span>
<span style="left:812.00px;top:206px;font-size:11.5px;letter-spacing:0.361px;color:#000;">29.08.2008 16:09:24</span>
<span style="left:26.50px;top:222px;font-size:11.5px;letter-spacing:0.312px;color:#000;">исходящие</span>
<span style="left:165.00px;top:222px;font-size:11.5px;letter-spacing:0.042px;color:#000;">Denis Pimenov</span>
<span style="left:374.50px;top:222px;font-size:11.5px;letter-spacing:0.361px;color:#000;">29.08.2008 16:09:24</span>
<span style="left:573.00px;top:222px;font-size:11.5px;letter-spacing:0.000px;color:#000;">Клиент</span>
<span style="left:812.00px;top:222px;font-size:11.5px;letter-spacing:0.361px;color:#000;">29.08.2008 16:30:23</span>
<span style="left:26.50px;top:238px;font-size:11.5px;letter-spacing:0.071px;color:#000;">входящее</span>
<span style="left:165.00px;top:238px;font-size:11.5px;letter-spacing:0.000px;color:#000;">Клиент</span>
<span style="left:373.50px;top:238px;font-size:11.5px;letter-spacing:0.417px;color:#000;">11.09.2008 12:31:46</span>
<span style="left:573.00px;top:238px;font-size:11.5px;letter-spacing:0.042px;color:#000;">Denis Pimenov</span>
<span style="left:811.00px;top:238px;font-size:11.5px;letter-spacing:0.472px;color:#000;">11.09.2008 23:32:47</span>
<span style="left:26.50px;top:254px;font-size:11.5px;letter-spacing:0.312px;color:#000;">исходящие</span>
<span style="left:165.00px;top:254px;font-size:11.5px;letter-spacing:0.042px;color:#000;">Denis Pimenov</span>
<span style="left:373.50px;top:254px;font-size:11.5px;letter-spacing:0.472px;color:#000;">11.09.2008 23:32:47</span>
<span style="left:573.00px;top:254px;font-size:11.5px;letter-spacing:0.000px;color:#000;">Клиент</span>
<span style="left:811.00px;top:254px;font-size:11.5px;letter-spacing:0.417px;color:#000;">12.09.2008 10:34:53</span>
<span style="left:36.50px;top:320px;font-size:11.5px;letter-spacing:-0.500px;color:#000;font-weight:bold;">Письмо</span>
<span style="left:36.00px;top:344px;font-size:11.5px;letter-spacing:-0.750px;color:#000;font-weight:bold;">От:</span>
<span style="left:77.00px;top:346px;font-size:11.5px;letter-spacing:0.100px;color:#000;">Клиент</span>
<span style="left:36.00px;top:367px;font-size:11.5px;letter-spacing:-0.625px;color:#000;font-weight:bold;">Кому:</span>
<span style="left:77.00px;top:369px;font-size:11.5px;letter-spacing:0.042px;color:#000;">Denis Pimenov</span>
<span style="left:419.50px;top:344px;font-size:11.5px;letter-spacing:-0.250px;color:#000;font-weight:bold;">Отправлено:</span>
<span style="left:419.50px;top:367px;font-size:11.5px;letter-spacing:-0.312px;color:#000;font-weight:bold;">Получено:</span>
<span style="left:496.50px;top:346px;font-size:11.5px;letter-spacing:0.419px;color:#000;">.08.2008 16:28:57</span>
<span style="left:496.50px;top:369px;font-size:11.5px;letter-spacing:0.356px;color:#000;">.08.2008 16:09:24</span>
<span style="left:47.50px;top:390px;font-size:11.5px;letter-spacing:-0.278px;color:#000;font-weight:bold;">Сообщение:</span>
<span style="left:616.00px;top:344px;font-size:11.5px;letter-spacing:-1.000px;color:#000;font-weight:bold;">Файлы</span>
<span style="left:729.00px;top:364px;font-size:11.5px;letter-spacing:0.071px;color:#000;">Название</span>
<span style="left:924.00px;top:364px;font-size:11.5px;letter-spacing:-0.400px;color:#000;">Размер</span>
<span style="left:48.50px;top:418px;font-size:11.5px;letter-spacing:0.058px;color:#000;">Предыдущую тему уже закрыли</span>
<span style="left:48.50px;top:432px;font-size:11.5px;letter-spacing:0.214px;color:#000;">К разговору на счет wifi.ufanet.ru и</span>
<span style="left:241.25px;top:432px;font-size:11.5px;letter-spacing:0.163px;color:#000;">возможности использовать</span>
<span style="left:395.50px;top:432px;font-size:11.5px;letter-spacing:0.225px;color:#000;">логин из другой базы.</span>
<span style="left:49.50px;top:446px;font-size:11.5px;letter-spacing:0.000px;color:#000;">_</span>
<span style="left:49.50px;top:460px;font-size:11.5px;letter-spacing:0.015px;color:#000;">Хорошо если сделать для каждой базы</span>
<span style="left:265.50px;top:460px;font-size:11.5px;letter-spacing:0.073px;color:#000;">свою авторизацию, то есть</span>
<span style="left:416.25px;top:460px;font-size:11.5px;letter-spacing:0.080px;color:#000;">отельную форму при этом</span>
<span style="left:49.50px;top:474px;font-size:11.5px;letter-spacing:0.242px;color:#000;">на action будут урлы wifiagent-а</span>
<span style="left:228.00px;top:474px;font-size:11.5px;letter-spacing:0.111px;color:#000;">отличающиеся только портами,</span>
<span style="left:405.50px;top:474px;font-size:11.5px;letter-spacing:0.091px;color:#000;">wifiagent уже сам будет</span>
<span style="left:49.50px;top:488px;font-size:11.5px;letter-spacing:0.040px;color:#000;">связываться с Radius-ами (</span>
<span style="left:200.50px;top:488px;font-size:11.5px;letter-spacing:0.145px;color:#000;">Radius на wifi и DS на хосте radius-1 )</span>
<span style="left:48.50px;top:502px;font-size:11.5px;letter-spacing:0.200px;color:#000;">При это возникают вот какие вопросы:</span>
<span style="left:48.50px;top:516px;font-size:11.5px;letter-spacing:-0.077px;color:#000;">1) Будет 1 WiFiAgent или 2?</span>
<span style="left:69.50px;top:543px;font-size:11.5px;letter-spacing:0.000px;color:#000;font-weight:bold;">перенос строк</span>
<span style="left:53.50px;top:580px;font-size:11.5px;letter-spacing:3.000px;color:#000;">&lt;&lt;</span>
<span style="left:259.70px;top:580px;font-size:11.5px;letter-spacing:3.500px;color:#000;">&gt;&gt;</span>
<span style="left:75.00px;top:580px;font-size:11.5px;letter-spacing:-0.244px;color:#000;font-weight:bold;">Предыдущее</span>
<span style="left:188.20px;top:580px;font-size:11.5px;letter-spacing:-0.325px;color:#000;font-weight:bold;">Следующее</span>
<span style="left:508.50px;top:580px;font-size:11.5px;letter-spacing:-0.188px;color:#999999;font-weight:bold;">Прочитано</span>
<span style="left:629.50px;top:580px;font-size:11.5px;letter-spacing:-0.357px;color:#000;font-weight:bold;">Ответить</span>
<span style="left:741.00px;top:580px;font-size:11.5px;letter-spacing:-0.455px;color:#999999;font-weight:bold;">Восстановить</span>
<span style="left:858.50px;top:580px;font-size:11.5px;letter-spacing:-0.250px;color:#999999;font-weight:bold;">Сохранить</span>
<span style="left:958.00px;top:580px;font-size:11.5px;letter-spacing:-0.400px;color:#000;font-weight:bold;">Отмена</span>
<span style="left:654.50px;top:536px;font-size:11.5px;letter-spacing:-0.583px;color:#000;font-weight:bold;">Скачать</span>
<span style="left:786.00px;top:536px;font-size:11.5px;letter-spacing:-0.429px;color:#999999;font-weight:bold;">Закачать</span>
<span style="left:924.00px;top:536px;font-size:11.5px;letter-spacing:-0.083px;color:#999999;font-weight:bold;">Удалить</span>
<span style="left:29.50px;top:629px;font-size:11.5px;letter-spacing:0.000px;color:#000;font-weight:bold;">HelpDesk</span>
<span style="left:120.00px;top:629px;font-size:11.5px;letter-spacing:0.025px;color:#000;font-weight:bold;">Редактор справочников</span>
<span style="left:295.00px;top:630px;font-size:11.5px;letter-spacing:1.250px;color:#000;font-weight:bold;font-family:'Liberation Serif',serif;">B000-08</span>
</div>
<svg style="left:12px;top:52px" width="12" height="15" viewBox="0 0 12 15" shape-rendering="crispEdges"><rect x="0" y="0" width="9" height="1" fill="#000000"/><rect x="0" y="1" width="1" height="1" fill="#000000"/><rect x="1" y="1" width="7" height="1" fill="#ffffff"/><rect x="8" y="1" width="2" height="1" fill="#000000"/><rect x="0" y="2" width="1" height="1" fill="#000000"/><rect x="1" y="2" width="7" height="1" fill="#ffffff"/><rect x="8" y="2" width="1" height="1" fill="#000000"/><rect x="9" y="2" width="1" height="1" fill="#ffffff"/><rect x="10" y="2" width="1" height="1" fill="#000000"/><rect x="0" y="3" width="1" height="1" fill="#000000"/><rect x="1" y="3" width="7" height="1" fill="#ffffff"/><rect x="8" y="3" width="4" height="1" fill="#000000"/><rect x="0" y="4" width="1" height="1" fill="#000000"/><rect x="1" y="4" width="10" height="1" fill="#ffffff"/><rect x="11" y="4" width="1" height="1" fill="#000000"/><rect x="0" y="5" width="1" height="1" fill="#000000"/><rect x="1" y="5" width="10" height="1" fill="#ffffff"/><rect x="11" y="5" width="1" height="1" fill="#000000"/><rect x="0" y="6" width="1" height="1" fill="#000000"/><rect x="1" y="6" width="10" height="1" fill="#ffffff"/><rect x="11" y="6" width="1" height="1" fill="#000000"/><rect x="0" y="7" width="1" height="1" fill="#000000"/><rect x="1" y="7" width="10" height="1" fill="#ffffff"/><rect x="11" y="7" width="1" height="1" fill="#000000"/><rect x="0" y="8" width="1" height="1" fill="#000000"/><rect x="1" y="8" width="10" height="1" fill="#ffffff"/><rect x="11" y="8" width="1" height="1" fill="#000000"/><rect x="0" y="9" width="1" height="1" fill="#000000"/><rect x="1" y="9" width="10" height="1" fill="#ffffff"/><rect x="11" y="9" width="1" height="1" fill="#000000"/><rect x="0" y="10" width="1" height="1" fill="#000000"/><rect x="1" y="10" width="10" height="1" fill="#ffffff"/><rect x="11" y="10" width="1" height="1" fill="#000000"/><rect x="0" y="11" width="1" height="1" fill="#000000"/><rect x="1" y="11" width="10" height="1" fill="#ffffff"/><rect x="11" y="11" width="1" height="1" fill="#000000"/><rect x="0" y="12" width="1" height="1" fill="#000000"/><rect x="1" y="12" width="10" height="1" fill="#ffffff"/><rect x="11" y="12" width="1" height="1" fill="#000000"/><rect x="0" y="13" width="1" height="1" fill="#000000"/><rect x="1" y="13" width="10" height="1" fill="#ffffff"/><rect x="11" y="13" width="1" height="1" fill="#000000"/><rect x="0" y="14" width="12" height="1" fill="#000000"/></svg>
<svg style="left:31px;top:56px" width="16" height="11" viewBox="0 0 16 11" shape-rendering="crispEdges"><rect x="1" y="0" width="3" height="1" fill="#000000"/><rect x="0" y="1" width="1" height="1" fill="#000000"/><rect x="1" y="1" width="1" height="1" fill="#ffff00"/><rect x="2" y="1" width="1" height="1" fill="#ffffff"/><rect x="3" y="1" width="1" height="1" fill="#ffff00"/><rect x="4" y="1" width="1" height="1" fill="#000000"/><rect x="0" y="2" width="1" height="1" fill="#000000"/><rect x="1" y="2" width="1" height="1" fill="#ffffff"/><rect x="2" y="2" width="1" height="1" fill="#ffff00"/><rect x="3" y="2" width="1" height="1" fill="#ffffff"/><rect x="4" y="2" width="1" height="1" fill="#ffff00"/><rect x="5" y="2" width="6" height="1" fill="#000000"/><rect x="0" y="3" width="1" height="1" fill="#000000"/><rect x="1" y="3" width="1" height="1" fill="#ffff00"/><rect x="2" y="3" width="1" height="1" fill="#ffffff"/><rect x="3" y="3" width="1" height="1" fill="#ffff00"/><rect x="4" y="3" width="1" height="1" fill="#ffffff"/><rect x="5" y="3" width="1" height="1" fill="#ffff00"/><rect x="6" y="3" width="1" height="1" fill="#ffffff"/><rect x="7" y="3" width="1" height="1" fill="#ffff00"/><rect x="8" y="3" width="1" height="1" fill="#ffffff"/><rect x="9" y="3" width="1" height="1" fill="#ffff00"/><rect x="10" y="3" width="1" height="1" fill="#000000"/><rect x="0" y="4" width="1" height="1" fill="#000000"/><rect x="1" y="4" width="1" height="1" fill="#ffffff"/><rect x="2" y="4" width="1" height="1" fill="#ffff00"/><rect x="3" y="4" width="1" height="1" fill="#ffffff"/><rect x="4" y="4" width="1" height="1" fill="#ffff00"/><rect x="5" y="4" width="11" height="1" fill="#000000"/><rect x="0" y="5" width="1" height="1" fill="#000000"/><rect x="1" y="5" width="1" height="1" fill="#ffff00"/><rect x="2" y="5" width="1" height="1" fill="#ffffff"/><rect x="3" y="5" width="1" height="1" fill="#ffff00"/><rect x="4" y="5" width="1" height="1" fill="#000000"/><rect x="5" y="5" width="9" height="1" fill="#808000"/><rect x="14" y="5" width="1" height="1" fill="#000000"/><rect x="0" y="6" width="1" height="1" fill="#000000"/><rect x="1" y="6" width="1" height="1" fill="#ffffff"/><rect x="2" y="6" width="1" height="1" fill="#ffff00"/><rect x="3" y="6" width="1" height="1" fill="#000000"/><rect x="4" y="6" width="9" height="1" fill="#808000"/><rect x="13" y="6" width="1" height="1" fill="#000000"/><rect x="0" y="7" width="1" height="1" fill="#000000"/><rect x="1" y="7" width="1" height="1" fill="#ffff00"/><rect x="2" y="7" width="1" height="1" fill="#000000"/><rect x="3" y="7" width="9" height="1" fill="#808000"/><rect x="12" y="7" width="1" height="1" fill="#000000"/><rect x="0" y="8" width="2" height="1" fill="#000000"/><rect x="2" y="8" width="9" height="1" fill="#808000"/><rect x="11" y="8" width="1" height="1" fill="#000000"/><rect x="0" y="9" width="1" height="1" fill="#000000"/><rect x="1" y="9" width="9" height="1" fill="#808000"/><rect x="10" y="9" width="1" height="1" fill="#000000"/><rect x="0" y="10" width="10" height="1" fill="#000000"/></svg>
<svg style="left:39px;top:53px" width="7" height="5" viewBox="0 0 7 5" shape-rendering="crispEdges"><rect x="2" y="0" width="3" height="1" fill="#404040"/><rect x="1" y="1" width="1" height="1" fill="#404040"/><rect x="5" y="1" width="1" height="1" fill="#404040"/><rect x="0" y="2" width="1" height="1" fill="#404040"/><rect x="4" y="2" width="1" height="1" fill="#404040"/><rect x="6" y="2" width="1" height="1" fill="#000000"/><rect x="4" y="3" width="3" height="1" fill="#000000"/><rect x="5" y="4" width="1" height="1" fill="#000000"/></svg>
<svg style="left:51px;top:56px" width="16" height="11" viewBox="0 0 16 11" shape-rendering="crispEdges"><rect x="1" y="0" width="3" height="1" fill="#000000"/><rect x="0" y="1" width="1" height="1" fill="#000000"/><rect x="1" y="1" width="1" height="1" fill="#ffff00"/><rect x="2" y="1" width="1" height="1" fill="#ffffff"/><rect x="3" y="1" width="1" height="1" fill="#ffff00"/><rect x="4" y="1" width="1" height="1" fill="#000000"/><rect x="0" y="2" width="1" height="1" fill="#000000"/><rect x="1" y="2" width="1" height="1" fill="#ffffff"/><rect x="2" y="2" width="1" height="1" fill="#ffff00"/><rect x="3" y="2" width="1" height="1" fill="#ffffff"/><rect x="4" y="2" width="1" height="1" fill="#ffff00"/><rect x="5" y="2" width="6" height="1" fill="#000000"/><rect x="0" y="3" width="1" height="1" fill="#000000"/><rect x="1" y="3" width="1" height="1" fill="#ffff00"/><rect x="2" y="3" width="1" height="1" fill="#ffffff"/><rect x="3" y="3" width="1" height="1" fill="#ffff00"/><rect x="4" y="3" width="1" height="1" fill="#ffffff"/><rect x="5" y="3" width="1" height="1" fill="#ffff00"/><rect x="6" y="3" width="1" height="1" fill="#ffffff"/><rect x="7" y="3" width="1" height="1" fill="#ffff00"/><rect x="8" y="3" width="1" height="1" fill="#ffffff"/><rect x="9" y="3" width="1" height="1" fill="#ffff00"/><rect x="10" y="3" width="1" height="1" fill="#000000"/><rect x="0" y="4" width="1" height="1" fill="#000000"/><rect x="1" y="4" width="1" height="1" fill="#ffffff"/><rect x="2" y="4" width="1" height="1" fill="#ffff00"/><rect x="3" y="4" width="1" height="1" fill="#ffffff"/><rect x="4" y="4" width="1" height="1" fill="#ffff00"/><rect x="5" y="4" width="11" height="1" fill="#000000"/><rect x="0" y="5" width="1" height="1" fill="#000000"/><rect x="1" y="5" width="1" height="1" fill="#ffff00"/><rect x="2" y="5" width="1" height="1" fill="#ffffff"/><rect x="3" y="5" width="1" height="1" fill="#ffff00"/><rect x="4" y="5" width="1" height="1" fill="#000000"/><rect x="5" y="5" width="9" height="1" fill="#808000"/><rect x="14" y="5" width="1" height="1" fill="#000000"/><rect x="0" y="6" width="1" height="1" fill="#000000"/><rect x="1" y="6" width="1" height="1" fill="#ffffff"/><rect x="2" y="6" width="1" height="1" fill="#ffff00"/><rect x="3" y="6" width="1" height="1" fill="#000000"/><rect x="4" y="6" width="9" height="1" fill="#808000"/><rect x="13" y="6" width="1" height="1" fill="#000000"/><rect x="0" y="7" width="1" height="1" fill="#000000"/><rect x="1" y="7" width="1" height="1" fill="#ffff00"/><rect x="2" y="7" width="1" height="1" fill="#000000"/><rect x="3" y="7" width="9" height="1" fill="#808000"/><rect x="12" y="7" width="1" height="1" fill="#000000"/><rect x="0" y="8" width="2" height="1" fill="#000000"/><rect x="2" y="8" width="9" height="1" fill="#808000"/><rect x="11" y="8" width="1" height="1" fill="#000000"/><rect x="0" y="9" width="1" height="1" fill="#000000"/><rect x="1" y="9" width="9" height="1" fill="#808000"/><rect x="10" y="9" width="1" height="1" fill="#000000"/><rect x="0" y="10" width="10" height="1" fill="#000000"/></svg>
<svg style="left:58px;top:53px" width="8" height="5" viewBox="0 0 8 5" shape-rendering="crispEdges"><rect x="3" y="0" width="3" height="1" fill="#404040"/><rect x="0" y="1" width="1" height="1" fill="#000000"/><rect x="2" y="1" width="1" height="1" fill="#404040"/><rect x="6" y="1" width="1" height="1" fill="#404040"/><rect x="0" y="2" width="3" height="1" fill="#000000"/><rect x="7" y="2" width="1" height="1" fill="#404040"/><rect x="0" y="3" width="4" height="1" fill="#000000"/></svg>
<svg style="left:71px;top:52px" width="14" height="14" viewBox="0 0 14 14" shape-rendering="crispEdges"><rect x="0" y="0" width="14" height="1" fill="#000000"/><rect x="0" y="1" width="1" height="1" fill="#000000"/><rect x="1" y="1" width="12" height="1" fill="#ffc830"/><rect x="13" y="1" width="1" height="1" fill="#000000"/><rect x="0" y="2" width="1" height="1" fill="#000000"/><rect x="1" y="2" width="5" height="1" fill="#ffc830"/><rect x="6" y="2" width="2" height="1" fill="#000000"/><rect x="8" y="2" width="5" height="1" fill="#ffc830"/><rect x="13" y="2" width="1" height="1" fill="#000000"/><rect x="0" y="3" width="1" height="1" fill="#000000"/><rect x="1" y="3" width="12" height="1" fill="#e8a000"/><rect x="13" y="3" width="1" height="1" fill="#000000"/><rect x="0" y="4" width="14" height="1" fill="#000000"/><rect x="0" y="5" width="1" height="1" fill="#000000"/><rect x="1" y="5" width="12" height="1" fill="#ffc830"/><rect x="13" y="5" width="1" height="1" fill="#000000"/><rect x="0" y="6" width="1" height="1" fill="#000000"/><rect x="1" y="6" width="5" height="1" fill="#ffc830"/><rect x="6" y="6" width="2" height="1" fill="#000000"/><rect x="8" y="6" width="5" height="1" fill="#ffc830"/><rect x="13" y="6" width="1" height="1" fill="#000000"/><rect x="0" y="7" width="1" height="1" fill="#000000"/><rect x="1" y="7" width="12" height="1" fill="#e8a000"/><rect x="13" y="7" width="1" height="1" fill="#000000"/><rect x="0" y="8" width="14" height="1" fill="#000000"/><rect x="0" y="9" width="1" height="1" fill="#000000"/><rect x="1" y="9" width="12" height="1" fill="#ffc830"/><rect x="13" y="9" width="1" height="1" fill="#000000"/><rect x="0" y="10" width="1" height="1" fill="#000000"/><rect x="1" y="10" width="5" height="1" fill="#ffc830"/><rect x="6" y="10" width="2" height="1" fill="#000000"/><rect x="8" y="10" width="5" height="1" fill="#ffc830"/><rect x="13" y="10" width="1" height="1" fill="#000000"/><rect x="0" y="11" width="1" height="1" fill="#000000"/><rect x="1" y="11" width="12" height="1" fill="#e8a000"/><rect x="13" y="11" width="1" height="1" fill="#000000"/><rect x="0" y="12" width="14" height="1" fill="#000000"/><rect x="1" y="13" width="2" height="1" fill="#000000"/><rect x="11" y="13" width="2" height="1" fill="#000000"/></svg>
<svg style="left:93px;top:53px" width="10" height="13" viewBox="0 0 10 13" shape-rendering="crispEdges"><rect x="0" y="0" width="7" height="1" fill="#000000"/><rect x="0" y="1" width="1" height="1" fill="#000000"/><rect x="1" y="1" width="5" height="1" fill="#ffffff"/><rect x="6" y="1" width="2" height="1" fill="#000000"/><rect x="0" y="2" width="1" height="1" fill="#000000"/><rect x="1" y="2" width="5" height="1" fill="#ffffff"/><rect x="6" y="2" width="1" height="1" fill="#000000"/><rect x="7" y="2" width="1" height="1" fill="#ffffff"/><rect x="8" y="2" width="1" height="1" fill="#000000"/><rect x="0" y="3" width="1" height="1" fill="#000000"/><rect x="1" y="3" width="5" height="1" fill="#ffffff"/><rect x="6" y="3" width="4" height="1" fill="#000000"/><rect x="0" y="4" width="1" height="1" fill="#000000"/><rect x="1" y="4" width="8" height="1" fill="#ffffff"/><rect x="9" y="4" width="1" height="1" fill="#000000"/><rect x="0" y="5" width="1" height="1" fill="#000000"/><rect x="1" y="5" width="8" height="1" fill="#ffffff"/><rect x="9" y="5" width="1" height="1" fill="#000000"/><rect x="0" y="6" width="1" height="1" fill="#000000"/><rect x="1" y="6" width="8" height="1" fill="#ffffff"/><rect x="9" y="6" width="1" height="1" fill="#000000"/><rect x="0" y="7" width="1" height="1" fill="#000000"/><rect x="1" y="7" width="8" height="1" fill="#ffffff"/><rect x="9" y="7" width="1" height="1" fill="#000000"/><rect x="0" y="8" width="1" height="1" fill="#000000"/><rect x="1" y="8" width="8" height="1" fill="#ffffff"/><rect x="9" y="8" width="1" height="1" fill="#000000"/><rect x="0" y="9" width="1" height="1" fill="#000000"/><rect x="1" y="9" width="8" height="1" fill="#ffffff"/><rect x="9" y="9" width="1" height="1" fill="#000000"/><rect x="0" y="10" width="1" height="1" fill="#000000"/><rect x="1" y="10" width="8" height="1" fill="#ffffff"/><rect x="9" y="10" width="1" height="1" fill="#000000"/><rect x="0" y="11" width="1" height="1" fill="#000000"/><rect x="1" y="11" width="8" height="1" fill="#ffffff"/><rect x="9" y="11" width="1" height="1" fill="#000000"/><rect x="0" y="12" width="10" height="1" fill="#000000"/></svg>
<svg style="left:91px;top:52px" width="15" height="16" viewBox="0 0 15 16"><path d="M1.5 1.5L9 9L12.5 14M13.5 1.5L6 9L1.5 14.5" stroke="#ff0000" stroke-width="1.4" fill="none" stroke-linecap="round"/></svg>
<svg style="left:121px;top:52px" width="15" height="16" viewBox="0 0 15 16" shape-rendering="crispEdges"><rect x="6" y="0" width="7" height="1" fill="#000000"/><rect x="3" y="1" width="4" height="1" fill="#000000"/><rect x="7" y="1" width="1" height="1" fill="#ffffff"/><rect x="8" y="1" width="1" height="1" fill="#00e000"/><rect x="9" y="1" width="1" height="1" fill="#ffffff"/><rect x="10" y="1" width="1" height="1" fill="#00e000"/><rect x="11" y="1" width="1" height="1" fill="#ffffff"/><rect x="12" y="1" width="2" height="1" fill="#000000"/><rect x="3" y="2" width="1" height="1" fill="#000000"/><rect x="4" y="2" width="1" height="1" fill="#ffffff"/><rect x="5" y="2" width="1" height="1" fill="#ffff00"/><rect x="6" y="2" width="1" height="1" fill="#ffffff"/><rect x="7" y="2" width="1" height="1" fill="#000000"/><rect x="8" y="2" width="4" height="1" fill="#ffffff"/><rect x="12" y="2" width="1" height="1" fill="#000000"/><rect x="13" y="2" width="1" height="1" fill="#ffffff"/><rect x="14" y="2" width="1" height="1" fill="#000000"/><rect x="3" y="3" width="1" height="1" fill="#000000"/><rect x="4" y="3" width="1" height="1" fill="#ffff00"/><rect x="5" y="3" width="1" height="1" fill="#ffffff"/><rect x="6" y="3" width="1" height="1" fill="#ffff00"/><rect x="7" y="3" width="1" height="1" fill="#ffffff"/><rect x="8" y="3" width="2" height="1" fill="#000000"/><rect x="10" y="3" width="1" height="1" fill="#00e000"/><rect x="11" y="3" width="3" height="1" fill="#ffffff"/><rect x="14" y="3" width="1" height="1" fill="#000000"/><rect x="0" y="4" width="7" height="1" fill="#000000"/><rect x="7" y="4" width="1" height="1" fill="#ffffff"/><rect x="8" y="4" width="1" height="1" fill="#000000"/><rect x="9" y="4" width="1" height="1" fill="#ffffff"/><rect x="10" y="4" width="1" height="1" fill="#000000"/><rect x="11" y="4" width="1" height="1" fill="#ffffff"/><rect x="12" y="4" width="1" height="1" fill="#00e000"/><rect x="13" y="4" width="1" height="1" fill="#ffffff"/><rect x="14" y="4" width="1" height="1" fill="#000000"/><rect x="0" y="5" width="1" height="1" fill="#000000"/><rect x="1" y="5" width="5" height="1" fill="#ffffff"/><rect x="6" y="5" width="3" height="1" fill="#000000"/><rect x="9" y="5" width="1" height="1" fill="#ffffff"/><rect x="10" y="5" width="1" height="1" fill="#000000"/><rect x="11" y="5" width="1" height="1" fill="#00e000"/><rect x="12" y="5" width="2" height="1" fill="#ffffff"/><rect x="14" y="5" width="1" height="1" fill="#000000"/><rect x="0" y="6" width="1" height="1" fill="#000000"/><rect x="1" y="6" width="5" height="1" fill="#ffffff"/><rect x="6" y="6" width="1" height="1" fill="#000000"/><rect x="7" y="6" width="1" height="1" fill="#ffffff"/><rect x="8" y="6" width="1" height="1" fill="#000000"/><rect x="9" y="6" width="1" height="1" fill="#ffffff"/><rect x="10" y="6" width="1" height="1" fill="#000000"/><rect x="11" y="6" width="1" height="1" fill="#ffffff"/><rect x="12" y="6" width="1" height="1" fill="#00e000"/><rect x="13" y="6" width="1" height="1" fill="#ffffff"/><rect x="14" y="6" width="1" height="1" fill="#000000"/><rect x="0" y="7" width="1" height="1" fill="#000000"/><rect x="1" y="7" width="1" height="1" fill="#ffffff"/><rect x="2" y="7" width="2" height="1" fill="#000000"/><rect x="4" y="7" width="2" height="1" fill="#ffffff"/><rect x="6" y="7" width="5" height="1" fill="#000000"/><rect x="11" y="7" width="3" height="1" fill="#ffffff"/><rect x="14" y="7" width="1" height="1" fill="#000000"/><rect x="0" y="8" width="1" height="1" fill="#000000"/><rect x="1" y="8" width="8" height="1" fill="#ffffff"/><rect x="9" y="8" width="2" height="1" fill="#000000"/><rect x="11" y="8" width="1" height="1" fill="#00e000"/><rect x="12" y="8" width="2" height="1" fill="#ffffff"/><rect x="14" y="8" width="1" height="1" fill="#000000"/><rect x="0" y="9" width="1" height="1" fill="#000000"/><rect x="1" y="9" width="8" height="1" fill="#ffffff"/><rect x="9" y="9" width="2" height="1" fill="#000000"/><rect x="11" y="9" width="1" height="1" fill="#ffffff"/><rect x="12" y="9" width="3" height="1" fill="#000000"/><rect x="0" y="10" width="1" height="1" fill="#000000"/><rect x="1" y="10" width="1" height="1" fill="#ffffff"/><rect x="2" y="10" width="5" height="1" fill="#000000"/><rect x="7" y="10" width="2" height="1" fill="#ffffff"/><rect x="9" y="10" width="4" height="1" fill="#000000"/><rect x="0" y="11" width="1" height="1" fill="#000000"/><rect x="1" y="11" width="8" height="1" fill="#ffffff"/><rect x="9" y="11" width="2" height="1" fill="#000000"/><rect x="0" y="12" width="1" height="1" fill="#000000"/><rect x="1" y="12" width="8" height="1" fill="#ffffff"/><rect x="9" y="12" width="1" height="1" fill="#000000"/><rect x="0" y="13" width="1" height="1" fill="#000000"/><rect x="1" y="13" width="1" height="1" fill="#ffffff"/><rect x="2" y="13" width="1" height="1" fill="#000000"/><rect x="3" y="13" width="1" height="1" fill="#ffffff"/><rect x="4" y="13" width="1" height="1" fill="#000000"/><rect x="5" y="13" width="1" height="1" fill="#ffffff"/><rect x="6" y="13" width="1" height="1" fill="#000000"/><rect x="7" y="13" width="2" height="1" fill="#ffffff"/><rect x="9" y="13" width="1" height="1" fill="#000000"/><rect x="0" y="14" width="1" height="1" fill="#000000"/><rect x="1" y="14" width="8" height="1" fill="#ffffff"/><rect x="9" y="14" width="1" height="1" fill="#000000"/><rect x="0" y="15" width="10" height="1" fill="#000000"/></svg>
<svg style="left:151px;top:52px" width="16" height="15" viewBox="0 0 16 15" shape-rendering="crispEdges"><rect x="3" y="0" width="3" height="1" fill="#1a1a8c"/><rect x="3" y="1" width="3" height="1" fill="#1a1a8c"/><rect x="3" y="2" width="3" height="1" fill="#1a1a8c"/><rect x="0" y="3" width="9" height="1" fill="#1a1a8c"/><rect x="0" y="4" width="9" height="1" fill="#1a1a8c"/><rect x="0" y="5" width="9" height="1" fill="#1a1a8c"/><rect x="3" y="6" width="3" height="1" fill="#1a1a8c"/><rect x="3" y="7" width="3" height="1" fill="#1a1a8c"/><rect x="6" y="7" width="2" height="1" fill="#000000"/><rect x="9" y="7" width="2" height="1" fill="#000000"/><rect x="12" y="7" width="2" height="1" fill="#000000"/><rect x="15" y="7" width="1" height="1" fill="#000000"/><rect x="3" y="8" width="3" height="1" fill="#1a1a8c"/><rect x="15" y="8" width="1" height="1" fill="#000000"/><rect x="5" y="9" width="1" height="1" fill="#000000"/><rect x="7" y="9" width="7" height="1" fill="#ff9c10"/><rect x="5" y="10" width="1" height="1" fill="#000000"/><rect x="7" y="10" width="7" height="1" fill="#ff9c10"/><rect x="15" y="10" width="1" height="1" fill="#000000"/><rect x="7" y="11" width="7" height="1" fill="#ff9c10"/><rect x="15" y="11" width="1" height="1" fill="#000000"/><rect x="5" y="12" width="1" height="1" fill="#000000"/><rect x="7" y="12" width="7" height="1" fill="#ff9c10"/><rect x="5" y="13" width="1" height="1" fill="#000000"/><rect x="15" y="13" width="1" height="1" fill="#000000"/><rect x="5" y="14" width="2" height="1" fill="#000000"/><rect x="8" y="14" width="2" height="1" fill="#000000"/><rect x="11" y="14" width="2" height="1" fill="#000000"/><rect x="14" y="14" width="2" height="1" fill="#000000"/></svg>
<svg style="left:171px;top:51px" width="16" height="14" viewBox="0 0 16 14" shape-rendering="crispEdges"><rect x="8" y="0" width="1" height="1" fill="#000000"/><rect x="10" y="0" width="1" height="1" fill="#000000"/><rect x="9" y="1" width="1" height="1" fill="#000000"/><rect x="8" y="2" width="2" height="1" fill="#000000"/><rect x="7" y="3" width="1" height="1" fill="#000000"/><rect x="8" y="3" width="1" height="1" fill="#cc9966"/><rect x="9" y="3" width="1" height="1" fill="#ffcc99"/><rect x="10" y="3" width="4" height="1" fill="#000000"/><rect x="14" y="3" width="2" height="1" fill="#1a1a8c"/><rect x="0" y="4" width="4" height="1" fill="#000000"/><rect x="6" y="4" width="1" height="1" fill="#000000"/><rect x="7" y="4" width="1" height="1" fill="#cc9966"/><rect x="8" y="4" width="6" height="1" fill="#ffcc99"/><rect x="14" y="4" width="2" height="1" fill="#1a1a8c"/><rect x="6" y="5" width="1" height="1" fill="#000000"/><rect x="7" y="5" width="1" height="1" fill="#cc9966"/><rect x="8" y="5" width="1" height="1" fill="#000000"/><rect x="9" y="5" width="1" height="1" fill="#cc9966"/><rect x="10" y="5" width="4" height="1" fill="#ffcc99"/><rect x="14" y="5" width="2" height="1" fill="#1a1a8c"/><rect x="0" y="6" width="4" height="1" fill="#000000"/><rect x="5" y="6" width="1" height="1" fill="#000000"/><rect x="6" y="6" width="1" height="1" fill="#cc9966"/><rect x="7" y="6" width="1" height="1" fill="#000000"/><rect x="8" y="6" width="1" height="1" fill="#cc9966"/><rect x="9" y="6" width="1" height="1" fill="#000000"/><rect x="10" y="6" width="4" height="1" fill="#ffcc99"/><rect x="14" y="6" width="2" height="1" fill="#1a1a8c"/><rect x="5" y="7" width="2" height="1" fill="#000000"/><rect x="7" y="7" width="1" height="1" fill="#cc9966"/><rect x="8" y="7" width="1" height="1" fill="#000000"/><rect x="9" y="7" width="1" height="1" fill="#cc9966"/><rect x="10" y="7" width="1" height="1" fill="#000000"/><rect x="11" y="7" width="3" height="1" fill="#ffcc99"/><rect x="14" y="7" width="2" height="1" fill="#1a1a8c"/><rect x="0" y="8" width="3" height="1" fill="#000000"/><rect x="4" y="8" width="2" height="1" fill="#000000"/><rect x="6" y="8" width="1" height="1" fill="#cc9966"/><rect x="7" y="8" width="1" height="1" fill="#000000"/><rect x="8" y="8" width="1" height="1" fill="#cc9966"/><rect x="9" y="8" width="1" height="1" fill="#000000"/><rect x="10" y="8" width="1" height="1" fill="#ffcc99"/><rect x="11" y="8" width="3" height="1" fill="#000000"/><rect x="14" y="8" width="2" height="1" fill="#1a1a8c"/><rect x="4" y="9" width="1" height="1" fill="#000000"/><rect x="5" y="9" width="1" height="1" fill="#cc9966"/><rect x="6" y="9" width="1" height="1" fill="#000000"/><rect x="7" y="9" width="1" height="1" fill="#cc9966"/><rect x="8" y="9" width="3" height="1" fill="#000000"/><rect x="14" y="9" width="2" height="1" fill="#1a1a8c"/><rect x="0" y="10" width="3" height="1" fill="#ff0000"/><rect x="3" y="10" width="5" height="1" fill="#000000"/><rect x="14" y="10" width="2" height="1" fill="#1a1a8c"/><rect x="0" y="11" width="3" height="1" fill="#ff0000"/><rect x="3" y="11" width="1" height="1" fill="#000000"/><rect x="4" y="11" width="4" height="1" fill="#ff0000"/><rect x="0" y="13" width="3" height="1" fill="#000000"/><rect x="4" y="13" width="3" height="1" fill="#000000"/></svg>
<svg style="left:191px;top:54px" width="13" height="13" viewBox="0 0 13 13" shape-rendering="crispEdges"><rect x="0" y="0" width="2" height="1" fill="#000000"/><rect x="3" y="0" width="2" height="1" fill="#000000"/><rect x="6" y="0" width="2" height="1" fill="#000000"/><rect x="9" y="0" width="2" height="1" fill="#000000"/><rect x="12" y="0" width="1" height="1" fill="#000000"/><rect x="0" y="1" width="1" height="1" fill="#000000"/><rect x="2" y="2" width="8" height="1" fill="#ff9c10"/><rect x="12" y="2" width="1" height="1" fill="#000000"/><rect x="0" y="3" width="1" height="1" fill="#000000"/><rect x="2" y="3" width="8" height="1" fill="#ff9c10"/><rect x="12" y="3" width="1" height="1" fill="#000000"/><rect x="0" y="4" width="1" height="1" fill="#000000"/><rect x="2" y="4" width="8" height="1" fill="#ff9c10"/><rect x="2" y="5" width="8" height="1" fill="#ff9c10"/><rect x="12" y="5" width="1" height="1" fill="#000000"/><rect x="0" y="6" width="1" height="1" fill="#000000"/><rect x="2" y="6" width="8" height="1" fill="#ff9c10"/><rect x="12" y="6" width="1" height="1" fill="#000000"/><rect x="0" y="7" width="1" height="1" fill="#000000"/><rect x="2" y="7" width="8" height="1" fill="#ff9c10"/><rect x="2" y="8" width="8" height="1" fill="#ff9c10"/><rect x="12" y="8" width="1" height="1" fill="#000000"/><rect x="0" y="9" width="1" height="1" fill="#000000"/><rect x="2" y="9" width="8" height="1" fill="#ff9c10"/><rect x="12" y="9" width="1" height="1" fill="#000000"/><rect x="0" y="10" width="1" height="1" fill="#000000"/><rect x="12" y="11" width="1" height="1" fill="#000000"/><rect x="0" y="12" width="2" height="1" fill="#000000"/><rect x="3" y="12" width="2" height="1" fill="#000000"/><rect x="6" y="12" width="2" height="1" fill="#000000"/><rect x="9" y="12" width="2" height="1" fill="#000000"/><rect x="12" y="12" width="1" height="1" fill="#000000"/></svg>
<svg style="left:194px;top:51px" width="14" height="13" viewBox="0 0 14 13"><path d="M2 2L12 10.6M11 1.2L6 6.5L1.2 10.8" stroke="#ff0000" stroke-width="1.25" fill="none" stroke-linecap="round"/></svg>
<svg style="left:223px;top:52px" width="11" height="14" viewBox="0 0 11 14" shape-rendering="crispEdges"><rect x="5" y="0" width="1" height="1" fill="#1a1a8c"/><rect x="5" y="1" width="2" height="1" fill="#1a1a8c"/><rect x="2" y="2" width="6" height="1" fill="#1a1a8c"/><rect x="1" y="3" width="8" height="1" fill="#1a1a8c"/><rect x="0" y="4" width="8" height="1" fill="#1a1a8c"/><rect x="0" y="5" width="3" height="1" fill="#1a1a8c"/><rect x="5" y="5" width="2" height="1" fill="#1a1a8c"/><rect x="0" y="6" width="2" height="1" fill="#1a1a8c"/><rect x="5" y="6" width="1" height="1" fill="#1a1a8c"/><rect x="5" y="7" width="1" height="1" fill="#1a1a8c"/><rect x="9" y="7" width="2" height="1" fill="#1a1a8c"/><rect x="4" y="8" width="2" height="1" fill="#1a1a8c"/><rect x="8" y="8" width="3" height="1" fill="#1a1a8c"/><rect x="3" y="9" width="8" height="1" fill="#1a1a8c"/><rect x="2" y="10" width="8" height="1" fill="#1a1a8c"/><rect x="3" y="11" width="6" height="1" fill="#1a1a8c"/><rect x="4" y="12" width="2" height="1" fill="#1a1a8c"/><rect x="5" y="13" width="1" height="1" fill="#1a1a8c"/></svg>
<svg style="left:1026px;top:51px" width="16" height="16" viewBox="0 0 16 16" shape-rendering="crispEdges"><rect x="0" y="0" width="7" height="1" fill="#f4f4f4"/><rect x="7" y="0" width="6" height="1" fill="#707070"/><rect x="13" y="0" width="1" height="1" fill="#20c8c8"/><rect x="14" y="0" width="2" height="1" fill="#f4f4f4"/><rect x="0" y="1" width="6" height="1" fill="#f4f4f4"/><rect x="6" y="1" width="6" height="1" fill="#707070"/><rect x="12" y="1" width="2" height="1" fill="#20c8c8"/><rect x="14" y="1" width="2" height="1" fill="#f4f4f4"/><rect x="0" y="2" width="6" height="1" fill="#f4f4f4"/><rect x="6" y="2" width="2" height="1" fill="#707070"/><rect x="8" y="2" width="2" height="1" fill="#a0a0a0"/><rect x="10" y="2" width="1" height="1" fill="#707070"/><rect x="11" y="2" width="3" height="1" fill="#20c8c8"/><rect x="14" y="2" width="1" height="1" fill="#109090"/><rect x="15" y="2" width="1" height="1" fill="#f4f4f4"/><rect x="0" y="3" width="5" height="1" fill="#f4f4f4"/><rect x="5" y="3" width="1" height="1" fill="#109090"/><rect x="6" y="3" width="2" height="1" fill="#707070"/><rect x="8" y="3" width="2" height="1" fill="#a0a0a0"/><rect x="10" y="3" width="4" height="1" fill="#20c8c8"/><rect x="14" y="3" width="1" height="1" fill="#109090"/><rect x="15" y="3" width="1" height="1" fill="#f4f4f4"/><rect x="0" y="4" width="5" height="1" fill="#f4f4f4"/><rect x="5" y="4" width="2" height="1" fill="#109090"/><rect x="7" y="4" width="3" height="1" fill="#707070"/><rect x="10" y="4" width="3" height="1" fill="#20c8c8"/><rect x="13" y="4" width="1" height="1" fill="#109090"/><rect x="14" y="4" width="1" height="1" fill="#404040"/><rect x="15" y="4" width="1" height="1" fill="#f4f4f4"/><rect x="0" y="5" width="1" height="1" fill="#f4f4f4"/><rect x="1" y="5" width="1" height="1" fill="#109090"/><rect x="2" y="5" width="4" height="1" fill="#20c8c8"/><rect x="6" y="5" width="1" height="1" fill="#60ffff"/><rect x="7" y="5" width="1" height="1" fill="#109090"/><rect x="8" y="5" width="2" height="1" fill="#707070"/><rect x="10" y="5" width="3" height="1" fill="#20c8c8"/><rect x="13" y="5" width="2" height="1" fill="#109090"/><rect x="15" y="5" width="1" height="1" fill="#f4f4f4"/><rect x="0" y="6" width="2" height="1" fill="#20c8c8"/><rect x="2" y="6" width="6" height="1" fill="#60ffff"/><rect x="8" y="6" width="1" height="1" fill="#109090"/><rect x="9" y="6" width="1" height="1" fill="#707070"/><rect x="10" y="6" width="3" height="1" fill="#20c8c8"/><rect x="13" y="6" width="1" height="1" fill="#109090"/><rect x="14" y="6" width="1" height="1" fill="#404040"/><rect x="15" y="6" width="1" height="1" fill="#f4f4f4"/><rect x="0" y="7" width="1" height="1" fill="#f4f4f4"/><rect x="1" y="7" width="1" height="1" fill="#109090"/><rect x="2" y="7" width="4" height="1" fill="#20c8c8"/><rect x="6" y="7" width="1" height="1" fill="#60ffff"/><rect x="7" y="7" width="1" height="1" fill="#109090"/><rect x="8" y="7" width="2" height="1" fill="#707070"/><rect x="10" y="7" width="3" height="1" fill="#20c8c8"/><rect x="13" y="7" width="2" height="1" fill="#109090"/><rect x="15" y="7" width="1" height="1" fill="#f4f4f4"/><rect x="0" y="8" width="5" height="1" fill="#f4f4f4"/><rect x="5" y="8" width="2" height="1" fill="#109090"/><rect x="7" y="8" width="3" height="1" fill="#707070"/><rect x="10" y="8" width="3" height="1" fill="#20c8c8"/><rect x="13" y="8" width="1" height="1" fill="#109090"/><rect x="14" y="8" width="1" height="1" fill="#404040"/><rect x="15" y="8" width="1" height="1" fill="#f4f4f4"/><rect x="0" y="9" width="5" height="1" fill="#f4f4f4"/><rect x="5" y="9" width="1" height="1" fill="#109090"/><rect x="6" y="9" width="2" height="1" fill="#707070"/><rect x="8" y="9" width="2" height="1" fill="#a0a0a0"/><rect x="10" y="9" width="3" height="1" fill="#20c8c8"/><rect x="13" y="9" width="2" height="1" fill="#109090"/><rect x="15" y="9" width="1" height="1" fill="#f4f4f4"/><rect x="0" y="10" width="6" height="1" fill="#f4f4f4"/><rect x="6" y="10" width="2" height="1" fill="#707070"/><rect x="8" y="10" width="2" height="1" fill="#a0a0a0"/><rect x="10" y="10" width="3" height="1" fill="#20c8c8"/><rect x="13" y="10" width="1" height="1" fill="#109090"/><rect x="14" y="10" width="1" height="1" fill="#404040"/><rect x="15" y="10" width="1" height="1" fill="#f4f4f4"/><rect x="0" y="11" width="6" height="1" fill="#f4f4f4"/><rect x="6" y="11" width="4" height="1" fill="#707070"/><rect x="10" y="11" width="3" height="1" fill="#20c8c8"/><rect x="13" y="11" width="2" height="1" fill="#109090"/><rect x="15" y="11" width="1" height="1" fill="#f4f4f4"/><rect x="0" y="12" width="1" height="1" fill="#f4f4f4"/><rect x="1" y="12" width="6" height="1" fill="#707070"/><rect x="7" y="12" width="3" height="1" fill="#f4f4f4"/><rect x="10" y="12" width="3" height="1" fill="#20c8c8"/><rect x="13" y="12" width="1" height="1" fill="#109090"/><rect x="14" y="12" width="2" height="1" fill="#404040"/><rect x="0" y="13" width="10" height="1" fill="#f4f4f4"/><rect x="10" y="13" width="3" height="1" fill="#20c8c8"/><rect x="13" y="13" width="1" height="1" fill="#109090"/><rect x="14" y="13" width="2" height="1" fill="#f4f4f4"/><rect x="0" y="14" width="1" height="1" fill="#f4f4f4"/><rect x="1" y="14" width="5" height="1" fill="#e8e8e8"/><rect x="6" y="14" width="2" height="1" fill="#f4f4f4"/><rect x="8" y="14" width="1" height="1" fill="#e8e8e8"/><rect x="9" y="14" width="1" height="1" fill="#f4f4f4"/><rect x="10" y="14" width="2" height="1" fill="#20c8c8"/><rect x="12" y="14" width="1" height="1" fill="#109090"/><rect x="13" y="14" width="1" height="1" fill="#f4f4f4"/><rect x="14" y="14" width="1" height="1" fill="#e8e8e8"/><rect x="15" y="14" width="1" height="1" fill="#f4f4f4"/><rect x="0" y="15" width="10" height="1" fill="#f4f4f4"/><rect x="10" y="15" width="1" height="1" fill="#20c8c8"/><rect x="11" y="15" width="1" height="1" fill="#109090"/><rect x="12" y="15" width="4" height="1" fill="#f4f4f4"/></svg>
<svg style="left:12px;top:4px" width="16" height="15" viewBox="0 0 16 15" shape-rendering="crispEdges"><rect x="3" y="0" width="8" height="1" fill="#000000"/><rect x="3" y="1" width="1" height="1" fill="#000000"/><rect x="4" y="1" width="7" height="1" fill="#ffffff"/><rect x="11" y="1" width="2" height="1" fill="#000000"/><rect x="3" y="2" width="1" height="1" fill="#000000"/><rect x="4" y="2" width="1" height="1" fill="#ff0000"/><rect x="5" y="2" width="1" height="1" fill="#ffffff"/><rect x="6" y="2" width="1" height="1" fill="#ff0000"/><rect x="7" y="2" width="1" height="1" fill="#ffffff"/><rect x="8" y="2" width="1" height="1" fill="#ff0000"/><rect x="9" y="2" width="1" height="1" fill="#ffffff"/><rect x="10" y="2" width="1" height="1" fill="#ff0000"/><rect x="11" y="2" width="1" height="1" fill="#000000"/><rect x="12" y="2" width="1" height="1" fill="#ffffff"/><rect x="13" y="2" width="1" height="1" fill="#000000"/><rect x="2" y="3" width="4" height="1" fill="#000000"/><rect x="6" y="3" width="5" height="1" fill="#ffffff"/><rect x="11" y="3" width="4" height="1" fill="#000000"/><rect x="1" y="4" width="1" height="1" fill="#000000"/><rect x="2" y="4" width="3" height="1" fill="#ffffff"/><rect x="5" y="4" width="1" height="1" fill="#ffff00"/><rect x="6" y="4" width="2" height="1" fill="#000000"/><rect x="8" y="4" width="1" height="1" fill="#ffffff"/><rect x="9" y="4" width="1" height="1" fill="#000000"/><rect x="10" y="4" width="1" height="1" fill="#ffffff"/><rect x="11" y="4" width="2" height="1" fill="#00a000"/><rect x="13" y="4" width="1" height="1" fill="#ffffff"/><rect x="14" y="4" width="1" height="1" fill="#000000"/><rect x="0" y="5" width="1" height="1" fill="#000000"/><rect x="1" y="5" width="2" height="1" fill="#ffffff"/><rect x="3" y="5" width="4" height="1" fill="#ffff00"/><rect x="7" y="5" width="1" height="1" fill="#000000"/><rect x="8" y="5" width="2" height="1" fill="#ffffff"/><rect x="10" y="5" width="4" height="1" fill="#00a000"/><rect x="14" y="5" width="1" height="1" fill="#000000"/><rect x="1" y="6" width="2" height="1" fill="#000000"/><rect x="3" y="6" width="2" height="1" fill="#ffff00"/><rect x="5" y="6" width="2" height="1" fill="#000000"/><rect x="7" y="6" width="4" height="1" fill="#ffffff"/><rect x="11" y="6" width="2" height="1" fill="#00a000"/><rect x="13" y="6" width="1" height="1" fill="#ffffff"/><rect x="14" y="6" width="1" height="1" fill="#000000"/><rect x="0" y="7" width="1" height="1" fill="#000000"/><rect x="1" y="7" width="1" height="1" fill="#ffffff"/><rect x="2" y="7" width="4" height="1" fill="#000000"/><rect x="6" y="7" width="1" height="1" fill="#ffff00"/><rect x="7" y="7" width="1" height="1" fill="#000000"/><rect x="8" y="7" width="1" height="1" fill="#ffffff"/><rect x="9" y="7" width="1" height="1" fill="#000000"/><rect x="10" y="7" width="1" height="1" fill="#ffffff"/><rect x="11" y="7" width="2" height="1" fill="#00a000"/><rect x="13" y="7" width="1" height="1" fill="#ffffff"/><rect x="14" y="7" width="1" height="1" fill="#000000"/><rect x="1" y="8" width="1" height="1" fill="#000000"/><rect x="2" y="8" width="1" height="1" fill="#ffffff"/><rect x="3" y="8" width="3" height="1" fill="#ffff00"/><rect x="6" y="8" width="2" height="1" fill="#000000"/><rect x="8" y="8" width="2" height="1" fill="#ffffff"/><rect x="10" y="8" width="4" height="1" fill="#00a000"/><rect x="14" y="8" width="1" height="1" fill="#000000"/><rect x="0" y="9" width="6" height="1" fill="#000000"/><rect x="6" y="9" width="1" height="1" fill="#ffff00"/><rect x="7" y="9" width="1" height="1" fill="#000000"/><rect x="8" y="9" width="3" height="1" fill="#ffffff"/><rect x="11" y="9" width="2" height="1" fill="#00a000"/><rect x="13" y="9" width="1" height="1" fill="#ffffff"/><rect x="14" y="9" width="1" height="1" fill="#000000"/><rect x="0" y="10" width="1" height="1" fill="#000000"/><rect x="1" y="10" width="2" height="1" fill="#ffffff"/><rect x="3" y="10" width="2" height="1" fill="#000000"/><rect x="5" y="10" width="2" height="1" fill="#ffff00"/><rect x="7" y="10" width="1" height="1" fill="#000000"/><rect x="8" y="10" width="1" height="1" fill="#ffffff"/><rect x="9" y="10" width="1" height="1" fill="#000000"/><rect x="10" y="10" width="1" height="1" fill="#ffffff"/><rect x="11" y="10" width="1" height="1" fill="#00a000"/><rect x="12" y="10" width="1" height="1" fill="#00e000"/><rect x="13" y="10" width="1" height="1" fill="#ffffff"/><rect x="14" y="10" width="1" height="1" fill="#000000"/><rect x="1" y="11" width="1" height="1" fill="#000000"/><rect x="2" y="11" width="1" height="1" fill="#ffffff"/><rect x="3" y="11" width="3" height="1" fill="#ffff00"/><rect x="6" y="11" width="2" height="1" fill="#000000"/><rect x="8" y="11" width="2" height="1" fill="#ffffff"/><rect x="10" y="11" width="1" height="1" fill="#00a000"/><rect x="11" y="11" width="2" height="1" fill="#00e000"/><rect x="13" y="11" width="1" height="1" fill="#00a000"/><rect x="14" y="11" width="1" height="1" fill="#000000"/><rect x="2" y="12" width="5" height="1" fill="#000000"/><rect x="7" y="12" width="4" height="1" fill="#ffffff"/><rect x="11" y="12" width="1" height="1" fill="#00a000"/><rect x="12" y="12" width="1" height="1" fill="#00e000"/><rect x="13" y="12" width="1" height="1" fill="#ffffff"/><rect x="14" y="12" width="1" height="1" fill="#000000"/><rect x="3" y="13" width="4" height="1" fill="#000000"/><rect x="7" y="13" width="7" height="1" fill="#ffffff"/><rect x="14" y="13" width="1" height="1" fill="#000000"/><rect x="4" y="14" width="11" height="1" fill="#000000"/></svg>
</body></html>
